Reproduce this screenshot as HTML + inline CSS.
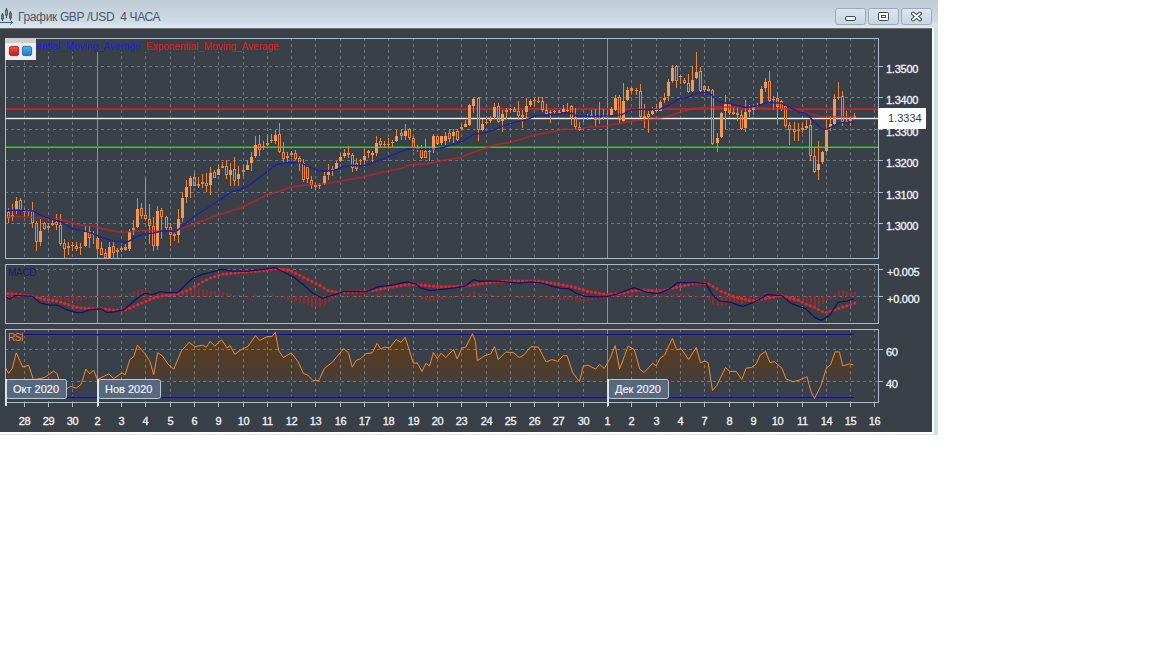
<!DOCTYPE html>
<html><head><meta charset="utf-8"><style>
html,body{margin:0;padding:0;background:#fff;width:1152px;height:648px;overflow:hidden;position:relative;font-family:"Liberation Sans", sans-serif}
</style></head><body>
<svg width="1152" height="648" viewBox="0 0 1152 648" style="position:absolute;left:0;top:0" shape-rendering="crispEdges">
<defs><linearGradient id="tb" x1="0" y1="0" x2="0" y2="1"><stop offset="0" stop-color="#bfcbd7"/><stop offset="0.75" stop-color="#cddae6"/><stop offset="1" stop-color="#dfe8f0"/></linearGradient><linearGradient id="rsif" gradientUnits="userSpaceOnUse" x1="0" y1="333" x2="0" y2="382"><stop offset="0" stop-color="#5e3c1a"/><stop offset="0.75" stop-color="#4e3d2e"/><stop offset="1" stop-color="#443f3c"/></linearGradient><linearGradient id="btn" x1="0" y1="0" x2="0" y2="1"><stop offset="0" stop-color="#dde6ef"/><stop offset="1" stop-color="#c9d4df"/></linearGradient><clipPath id="cmain"><rect x="6" y="39" width="872" height="219"/></clipPath><clipPath id="cmacd"><rect x="6" y="265" width="872" height="58"/></clipPath><clipPath id="crsi"><rect x="6" y="330" width="872" height="72"/></clipPath><clipPath id="crsif"><rect x="6" y="330" width="872" height="51"/></clipPath></defs>
<rect x="0" y="0" width="1152" height="648" fill="#ffffff"/>
<rect x="0" y="0" width="938" height="28" fill="url(#tb)"/>
<rect x="0" y="28" width="932" height="1" fill="#6c6c6e"/>
<rect x="0" y="29" width="932" height="403" fill="#3a4048"/>
<rect x="932" y="28" width="2" height="407" fill="#ffffff"/>
<rect x="934" y="28" width="4" height="407" fill="#d3dfea"/>
<rect x="0" y="434" width="934" height="1" fill="#e2e6ea"/>
<polygon points="5.7,381.0 5.7,368.1 8.6,373.5 12.4,368.1 16.2,352.8 22.9,367.2 28.6,365.2 33.4,379.6 41.1,378.6 45.8,376.7 53.5,371.0 57.3,373.8 59.2,381.5 65.9,389.1 70.7,386.3 76.4,388.2 81.2,384.3 85.9,369.1 89.8,373.8 93.6,370.0 97.4,379.6 108.9,373.8 113.6,378.6 122.2,372.9 125.1,374.8 129.9,359.5 133.7,356.6 137.5,345.2 145.1,353.8 149.9,361.4 153.7,374.8 157.6,352.8 162.3,355.7 168.1,364.3 173.8,369.1 181.4,350.9 189.1,342.3 194.8,346.7 202.4,345.2 206.3,347.1 210.1,341.4 214.8,346.1 221.5,339.8 227.2,348.0 230.1,345.6 234.8,354.4 240.6,350.0 248.2,346.1 255.5,335.6 259.7,340.4 267.3,336.6 272.1,336.6 275.3,332.2 278.8,350.9 283.5,357.6 291.2,352.8 297.9,361.4 303.6,373.8 307.4,374.8 313.1,380.5 318.9,380.5 324.6,368.1 332.2,362.4 343.7,348.6 348.5,352.8 352.3,367.2 356.1,360.5 360.9,358.6 365.7,353.8 372.3,352.8 377.1,343.3 380.9,349.0 384.8,347.1 389.5,348.0 396.2,339.5 401.0,342.3 405.2,337.2 413.4,363.3 417.2,362.8 422.0,371.5 425.8,363.3 429.5,366.2 433.4,352.4 437.2,358.6 441.0,353.2 445.8,357.6 453.4,349.4 457.2,358.9 462.0,348.0 465.8,347.1 472.5,333.7 475.4,341.4 477.3,360.5 484.9,355.7 490.7,353.8 494.5,346.7 498.3,359.5 505.9,351.9 513.6,352.8 519.3,357.6 524.1,354.7 530.8,346.7 538.4,347.1 546.1,362.0 551.8,359.5 557.5,361.4 563.3,355.7 567.1,355.7 572.8,372.9 579.5,381.5 583.3,366.2 588.1,365.2 595.7,369.1 599.5,364.3 604.3,368.5 610.0,358.6 615.2,345.6 619.6,369.1 628.2,346.1 634.3,349.7 639.8,369.2 644.1,372.5 652.8,363.2 656.0,366.0 660.4,358.0 664.7,355.1 672.3,338.4 676.7,349.7 681.0,348.6 688.6,359.5 696.2,347.5 700.5,362.7 704.9,361.0 708.1,362.7 712.5,390.5 716.8,385.5 725.5,367.5 729.8,371.4 736.3,371.4 741.8,379.6 746.1,368.1 751.5,367.5 755.9,364.5 760.2,355.1 765.6,351.4 770.0,362.7 774.3,361.6 781.9,368.1 786.2,379.0 792.8,381.8 799.3,380.1 806.9,376.8 811.2,392.0 814.5,398.5 821.0,385.5 826.4,368.1 830.7,364.5 835.1,351.9 839.4,351.9 842.7,366.0 849.2,363.8 853.5,364.9 853.5,381.0" fill="url(#rsif)" shape-rendering="auto" clip-path="url(#crsif)"/>
<line x1="24.5" y1="38" x2="24.5" y2="258" stroke="#6f7882" stroke-width="1" stroke-dasharray="3 3" opacity="1"/>
<line x1="48.5" y1="38" x2="48.5" y2="258" stroke="#6f7882" stroke-width="1" stroke-dasharray="3 3" opacity="1"/>
<line x1="72.5" y1="38" x2="72.5" y2="258" stroke="#6f7882" stroke-width="1" stroke-dasharray="3 3" opacity="1"/>
<rect x="97" y="39" width="1" height="219" fill="#8893a0"/>
<line x1="121.5" y1="38" x2="121.5" y2="258" stroke="#6f7882" stroke-width="1" stroke-dasharray="3 3" opacity="1"/>
<line x1="145.5" y1="38" x2="145.5" y2="258" stroke="#6f7882" stroke-width="1" stroke-dasharray="3 3" opacity="1"/>
<line x1="170.5" y1="38" x2="170.5" y2="258" stroke="#6f7882" stroke-width="1" stroke-dasharray="3 3" opacity="1"/>
<line x1="194.5" y1="38" x2="194.5" y2="258" stroke="#6f7882" stroke-width="1" stroke-dasharray="3 3" opacity="1"/>
<line x1="218.5" y1="38" x2="218.5" y2="258" stroke="#6f7882" stroke-width="1" stroke-dasharray="3 3" opacity="1"/>
<line x1="243.5" y1="38" x2="243.5" y2="258" stroke="#6f7882" stroke-width="1" stroke-dasharray="3 3" opacity="1"/>
<line x1="267.5" y1="38" x2="267.5" y2="258" stroke="#6f7882" stroke-width="1" stroke-dasharray="3 3" opacity="1"/>
<line x1="291.5" y1="38" x2="291.5" y2="258" stroke="#6f7882" stroke-width="1" stroke-dasharray="3 3" opacity="1"/>
<line x1="315.5" y1="38" x2="315.5" y2="258" stroke="#6f7882" stroke-width="1" stroke-dasharray="3 3" opacity="1"/>
<line x1="340.5" y1="38" x2="340.5" y2="258" stroke="#6f7882" stroke-width="1" stroke-dasharray="3 3" opacity="1"/>
<line x1="364.5" y1="38" x2="364.5" y2="258" stroke="#6f7882" stroke-width="1" stroke-dasharray="3 3" opacity="1"/>
<line x1="388.5" y1="38" x2="388.5" y2="258" stroke="#6f7882" stroke-width="1" stroke-dasharray="3 3" opacity="1"/>
<line x1="413.5" y1="38" x2="413.5" y2="258" stroke="#6f7882" stroke-width="1" stroke-dasharray="3 3" opacity="1"/>
<line x1="437.5" y1="38" x2="437.5" y2="258" stroke="#6f7882" stroke-width="1" stroke-dasharray="3 3" opacity="1"/>
<line x1="461.5" y1="38" x2="461.5" y2="258" stroke="#6f7882" stroke-width="1" stroke-dasharray="3 3" opacity="1"/>
<line x1="486.5" y1="38" x2="486.5" y2="258" stroke="#6f7882" stroke-width="1" stroke-dasharray="3 3" opacity="1"/>
<line x1="510.5" y1="38" x2="510.5" y2="258" stroke="#6f7882" stroke-width="1" stroke-dasharray="3 3" opacity="1"/>
<line x1="534.5" y1="38" x2="534.5" y2="258" stroke="#6f7882" stroke-width="1" stroke-dasharray="3 3" opacity="1"/>
<line x1="558.5" y1="38" x2="558.5" y2="258" stroke="#6f7882" stroke-width="1" stroke-dasharray="3 3" opacity="1"/>
<line x1="583.5" y1="38" x2="583.5" y2="258" stroke="#6f7882" stroke-width="1" stroke-dasharray="3 3" opacity="1"/>
<rect x="607" y="39" width="1" height="219" fill="#8893a0"/>
<line x1="631.5" y1="38" x2="631.5" y2="258" stroke="#6f7882" stroke-width="1" stroke-dasharray="3 3" opacity="1"/>
<line x1="656.5" y1="38" x2="656.5" y2="258" stroke="#6f7882" stroke-width="1" stroke-dasharray="3 3" opacity="1"/>
<line x1="680.5" y1="38" x2="680.5" y2="258" stroke="#6f7882" stroke-width="1" stroke-dasharray="3 3" opacity="1"/>
<line x1="704.5" y1="38" x2="704.5" y2="258" stroke="#6f7882" stroke-width="1" stroke-dasharray="3 3" opacity="1"/>
<line x1="729.5" y1="38" x2="729.5" y2="258" stroke="#6f7882" stroke-width="1" stroke-dasharray="3 3" opacity="1"/>
<line x1="753.5" y1="38" x2="753.5" y2="258" stroke="#6f7882" stroke-width="1" stroke-dasharray="3 3" opacity="1"/>
<line x1="777.5" y1="38" x2="777.5" y2="258" stroke="#6f7882" stroke-width="1" stroke-dasharray="3 3" opacity="1"/>
<line x1="802.5" y1="38" x2="802.5" y2="258" stroke="#6f7882" stroke-width="1" stroke-dasharray="3 3" opacity="1"/>
<line x1="826.5" y1="38" x2="826.5" y2="258" stroke="#6f7882" stroke-width="1" stroke-dasharray="3 3" opacity="1"/>
<line x1="850.5" y1="38" x2="850.5" y2="258" stroke="#6f7882" stroke-width="1" stroke-dasharray="3 3" opacity="1"/>
<line x1="874.5" y1="38" x2="874.5" y2="258" stroke="#6f7882" stroke-width="1" stroke-dasharray="3 3" opacity="1"/>
<line x1="24.5" y1="264" x2="24.5" y2="323" stroke="#6f7882" stroke-width="1" stroke-dasharray="3 3" opacity="1"/>
<line x1="48.5" y1="264" x2="48.5" y2="323" stroke="#6f7882" stroke-width="1" stroke-dasharray="3 3" opacity="1"/>
<line x1="72.5" y1="264" x2="72.5" y2="323" stroke="#6f7882" stroke-width="1" stroke-dasharray="3 3" opacity="1"/>
<rect x="97" y="265" width="1" height="58" fill="#8893a0"/>
<line x1="121.5" y1="264" x2="121.5" y2="323" stroke="#6f7882" stroke-width="1" stroke-dasharray="3 3" opacity="1"/>
<line x1="145.5" y1="264" x2="145.5" y2="323" stroke="#6f7882" stroke-width="1" stroke-dasharray="3 3" opacity="1"/>
<line x1="170.5" y1="264" x2="170.5" y2="323" stroke="#6f7882" stroke-width="1" stroke-dasharray="3 3" opacity="1"/>
<line x1="194.5" y1="264" x2="194.5" y2="323" stroke="#6f7882" stroke-width="1" stroke-dasharray="3 3" opacity="1"/>
<line x1="218.5" y1="264" x2="218.5" y2="323" stroke="#6f7882" stroke-width="1" stroke-dasharray="3 3" opacity="1"/>
<line x1="243.5" y1="264" x2="243.5" y2="323" stroke="#6f7882" stroke-width="1" stroke-dasharray="3 3" opacity="1"/>
<line x1="267.5" y1="264" x2="267.5" y2="323" stroke="#6f7882" stroke-width="1" stroke-dasharray="3 3" opacity="1"/>
<line x1="291.5" y1="264" x2="291.5" y2="323" stroke="#6f7882" stroke-width="1" stroke-dasharray="3 3" opacity="1"/>
<line x1="315.5" y1="264" x2="315.5" y2="323" stroke="#6f7882" stroke-width="1" stroke-dasharray="3 3" opacity="1"/>
<line x1="340.5" y1="264" x2="340.5" y2="323" stroke="#6f7882" stroke-width="1" stroke-dasharray="3 3" opacity="1"/>
<line x1="364.5" y1="264" x2="364.5" y2="323" stroke="#6f7882" stroke-width="1" stroke-dasharray="3 3" opacity="1"/>
<line x1="388.5" y1="264" x2="388.5" y2="323" stroke="#6f7882" stroke-width="1" stroke-dasharray="3 3" opacity="1"/>
<line x1="413.5" y1="264" x2="413.5" y2="323" stroke="#6f7882" stroke-width="1" stroke-dasharray="3 3" opacity="1"/>
<line x1="437.5" y1="264" x2="437.5" y2="323" stroke="#6f7882" stroke-width="1" stroke-dasharray="3 3" opacity="1"/>
<line x1="461.5" y1="264" x2="461.5" y2="323" stroke="#6f7882" stroke-width="1" stroke-dasharray="3 3" opacity="1"/>
<line x1="486.5" y1="264" x2="486.5" y2="323" stroke="#6f7882" stroke-width="1" stroke-dasharray="3 3" opacity="1"/>
<line x1="510.5" y1="264" x2="510.5" y2="323" stroke="#6f7882" stroke-width="1" stroke-dasharray="3 3" opacity="1"/>
<line x1="534.5" y1="264" x2="534.5" y2="323" stroke="#6f7882" stroke-width="1" stroke-dasharray="3 3" opacity="1"/>
<line x1="558.5" y1="264" x2="558.5" y2="323" stroke="#6f7882" stroke-width="1" stroke-dasharray="3 3" opacity="1"/>
<line x1="583.5" y1="264" x2="583.5" y2="323" stroke="#6f7882" stroke-width="1" stroke-dasharray="3 3" opacity="1"/>
<rect x="607" y="265" width="1" height="58" fill="#8893a0"/>
<line x1="631.5" y1="264" x2="631.5" y2="323" stroke="#6f7882" stroke-width="1" stroke-dasharray="3 3" opacity="1"/>
<line x1="656.5" y1="264" x2="656.5" y2="323" stroke="#6f7882" stroke-width="1" stroke-dasharray="3 3" opacity="1"/>
<line x1="680.5" y1="264" x2="680.5" y2="323" stroke="#6f7882" stroke-width="1" stroke-dasharray="3 3" opacity="1"/>
<line x1="704.5" y1="264" x2="704.5" y2="323" stroke="#6f7882" stroke-width="1" stroke-dasharray="3 3" opacity="1"/>
<line x1="729.5" y1="264" x2="729.5" y2="323" stroke="#6f7882" stroke-width="1" stroke-dasharray="3 3" opacity="1"/>
<line x1="753.5" y1="264" x2="753.5" y2="323" stroke="#6f7882" stroke-width="1" stroke-dasharray="3 3" opacity="1"/>
<line x1="777.5" y1="264" x2="777.5" y2="323" stroke="#6f7882" stroke-width="1" stroke-dasharray="3 3" opacity="1"/>
<line x1="802.5" y1="264" x2="802.5" y2="323" stroke="#6f7882" stroke-width="1" stroke-dasharray="3 3" opacity="1"/>
<line x1="826.5" y1="264" x2="826.5" y2="323" stroke="#6f7882" stroke-width="1" stroke-dasharray="3 3" opacity="1"/>
<line x1="850.5" y1="264" x2="850.5" y2="323" stroke="#6f7882" stroke-width="1" stroke-dasharray="3 3" opacity="1"/>
<line x1="874.5" y1="264" x2="874.5" y2="323" stroke="#6f7882" stroke-width="1" stroke-dasharray="3 3" opacity="1"/>
<line x1="24.5" y1="329" x2="24.5" y2="402" stroke="#6f7882" stroke-width="1" stroke-dasharray="3 3" opacity="1"/>
<line x1="48.5" y1="329" x2="48.5" y2="402" stroke="#6f7882" stroke-width="1" stroke-dasharray="3 3" opacity="1"/>
<line x1="72.5" y1="329" x2="72.5" y2="402" stroke="#6f7882" stroke-width="1" stroke-dasharray="3 3" opacity="1"/>
<rect x="97" y="330" width="1" height="72" fill="#8893a0"/>
<line x1="121.5" y1="329" x2="121.5" y2="402" stroke="#6f7882" stroke-width="1" stroke-dasharray="3 3" opacity="1"/>
<line x1="145.5" y1="329" x2="145.5" y2="402" stroke="#6f7882" stroke-width="1" stroke-dasharray="3 3" opacity="1"/>
<line x1="170.5" y1="329" x2="170.5" y2="402" stroke="#6f7882" stroke-width="1" stroke-dasharray="3 3" opacity="1"/>
<line x1="194.5" y1="329" x2="194.5" y2="402" stroke="#6f7882" stroke-width="1" stroke-dasharray="3 3" opacity="1"/>
<line x1="218.5" y1="329" x2="218.5" y2="402" stroke="#6f7882" stroke-width="1" stroke-dasharray="3 3" opacity="1"/>
<line x1="243.5" y1="329" x2="243.5" y2="402" stroke="#6f7882" stroke-width="1" stroke-dasharray="3 3" opacity="1"/>
<line x1="267.5" y1="329" x2="267.5" y2="402" stroke="#6f7882" stroke-width="1" stroke-dasharray="3 3" opacity="1"/>
<line x1="291.5" y1="329" x2="291.5" y2="402" stroke="#6f7882" stroke-width="1" stroke-dasharray="3 3" opacity="1"/>
<line x1="315.5" y1="329" x2="315.5" y2="402" stroke="#6f7882" stroke-width="1" stroke-dasharray="3 3" opacity="1"/>
<line x1="340.5" y1="329" x2="340.5" y2="402" stroke="#6f7882" stroke-width="1" stroke-dasharray="3 3" opacity="1"/>
<line x1="364.5" y1="329" x2="364.5" y2="402" stroke="#6f7882" stroke-width="1" stroke-dasharray="3 3" opacity="1"/>
<line x1="388.5" y1="329" x2="388.5" y2="402" stroke="#6f7882" stroke-width="1" stroke-dasharray="3 3" opacity="1"/>
<line x1="413.5" y1="329" x2="413.5" y2="402" stroke="#6f7882" stroke-width="1" stroke-dasharray="3 3" opacity="1"/>
<line x1="437.5" y1="329" x2="437.5" y2="402" stroke="#6f7882" stroke-width="1" stroke-dasharray="3 3" opacity="1"/>
<line x1="461.5" y1="329" x2="461.5" y2="402" stroke="#6f7882" stroke-width="1" stroke-dasharray="3 3" opacity="1"/>
<line x1="486.5" y1="329" x2="486.5" y2="402" stroke="#6f7882" stroke-width="1" stroke-dasharray="3 3" opacity="1"/>
<line x1="510.5" y1="329" x2="510.5" y2="402" stroke="#6f7882" stroke-width="1" stroke-dasharray="3 3" opacity="1"/>
<line x1="534.5" y1="329" x2="534.5" y2="402" stroke="#6f7882" stroke-width="1" stroke-dasharray="3 3" opacity="1"/>
<line x1="558.5" y1="329" x2="558.5" y2="402" stroke="#6f7882" stroke-width="1" stroke-dasharray="3 3" opacity="1"/>
<line x1="583.5" y1="329" x2="583.5" y2="402" stroke="#6f7882" stroke-width="1" stroke-dasharray="3 3" opacity="1"/>
<rect x="607" y="330" width="1" height="72" fill="#8893a0"/>
<line x1="631.5" y1="329" x2="631.5" y2="402" stroke="#6f7882" stroke-width="1" stroke-dasharray="3 3" opacity="1"/>
<line x1="656.5" y1="329" x2="656.5" y2="402" stroke="#6f7882" stroke-width="1" stroke-dasharray="3 3" opacity="1"/>
<line x1="680.5" y1="329" x2="680.5" y2="402" stroke="#6f7882" stroke-width="1" stroke-dasharray="3 3" opacity="1"/>
<line x1="704.5" y1="329" x2="704.5" y2="402" stroke="#6f7882" stroke-width="1" stroke-dasharray="3 3" opacity="1"/>
<line x1="729.5" y1="329" x2="729.5" y2="402" stroke="#6f7882" stroke-width="1" stroke-dasharray="3 3" opacity="1"/>
<line x1="753.5" y1="329" x2="753.5" y2="402" stroke="#6f7882" stroke-width="1" stroke-dasharray="3 3" opacity="1"/>
<line x1="777.5" y1="329" x2="777.5" y2="402" stroke="#6f7882" stroke-width="1" stroke-dasharray="3 3" opacity="1"/>
<line x1="802.5" y1="329" x2="802.5" y2="402" stroke="#6f7882" stroke-width="1" stroke-dasharray="3 3" opacity="1"/>
<line x1="826.5" y1="329" x2="826.5" y2="402" stroke="#6f7882" stroke-width="1" stroke-dasharray="3 3" opacity="1"/>
<line x1="850.5" y1="329" x2="850.5" y2="402" stroke="#6f7882" stroke-width="1" stroke-dasharray="3 3" opacity="1"/>
<line x1="874.5" y1="329" x2="874.5" y2="402" stroke="#6f7882" stroke-width="1" stroke-dasharray="3 3" opacity="1"/>
<line x1="5" y1="66.5" x2="878" y2="66.5" stroke="#6f7882" stroke-width="1" stroke-dasharray="3 3" opacity="1"/>
<line x1="5" y1="97.5" x2="878" y2="97.5" stroke="#6f7882" stroke-width="1" stroke-dasharray="3 3" opacity="1"/>
<line x1="5" y1="129.5" x2="878" y2="129.5" stroke="#6f7882" stroke-width="1" stroke-dasharray="3 3" opacity="1"/>
<line x1="5" y1="160.5" x2="878" y2="160.5" stroke="#6f7882" stroke-width="1" stroke-dasharray="3 3" opacity="1"/>
<line x1="5" y1="192.5" x2="878" y2="192.5" stroke="#6f7882" stroke-width="1" stroke-dasharray="3 3" opacity="1"/>
<line x1="5" y1="223.5" x2="878" y2="223.5" stroke="#6f7882" stroke-width="1" stroke-dasharray="3 3" opacity="1"/>
<line x1="5" y1="269.5" x2="878" y2="269.5" stroke="#6f7882" stroke-width="1" stroke-dasharray="3 3" opacity="1"/>
<line x1="5" y1="296.5" x2="878" y2="296.5" stroke="#6f7882" stroke-width="1" stroke-dasharray="3 3" opacity="1"/>
<line x1="5" y1="349.5" x2="878" y2="349.5" stroke="#6f7882" stroke-width="1" stroke-dasharray="3 3" opacity="1"/>
<line x1="5" y1="381.5" x2="878" y2="381.5" stroke="#6f7882" stroke-width="1" stroke-dasharray="3 3" opacity="1"/>
<rect x="6" y="108" width="872" height="2" fill="#dc2020" opacity="0.75"/>
<rect x="6" y="118" width="872" height="1" fill="#eef0f2"/>
<rect x="6" y="117" width="872" height="1" fill="#eef0f2" opacity="0.2"/>
<rect x="6" y="119" width="872" height="1" fill="#eef0f2" opacity="0.2"/>
<rect x="6" y="146" width="872" height="1" fill="#2a8a2a"/>
<rect x="6" y="147" width="872" height="1" fill="#44c044"/>
<g clip-path="url(#cmain)">
<rect x="8" y="208" width="1" height="4" fill="#e8863f"/><rect x="8" y="218" width="1" height="5" fill="#e8863f"/><rect x="7" y="212" width="1" height="6" fill="#e8863f"/><rect x="9" y="212" width="1" height="6" fill="#e8863f"/><rect x="8" y="212" width="1" height="1" fill="#e8863f"/><rect x="8" y="217" width="1" height="1" fill="#e8863f"/><rect x="12" y="204" width="1" height="17" fill="#e8863f"/><rect x="11" y="215" width="3" height="2" fill="#e8863f"/><rect x="16" y="197" width="1" height="17" fill="#e8863f"/><rect x="15" y="201" width="3" height="10" fill="#f09a5a"/><rect x="20" y="198" width="1" height="2" fill="#e8863f"/><rect x="20" y="210" width="1" height="0" fill="#e8863f"/><rect x="19" y="200" width="1" height="10" fill="#e8863f"/><rect x="21" y="200" width="1" height="10" fill="#e8863f"/><rect x="20" y="200" width="1" height="1" fill="#e8863f"/><rect x="20" y="209" width="1" height="1" fill="#e8863f"/><rect x="24" y="208" width="1" height="9" fill="#e8863f"/><rect x="23" y="210" width="3" height="2" fill="#e8863f"/><rect x="28" y="209" width="1" height="7" fill="#e8863f"/><rect x="27" y="210" width="3" height="2" fill="#e8863f"/><rect x="32" y="202" width="1" height="9" fill="#e8863f"/><rect x="32" y="223" width="1" height="5" fill="#e8863f"/><rect x="31" y="211" width="1" height="12" fill="#e8863f"/><rect x="33" y="211" width="1" height="12" fill="#e8863f"/><rect x="32" y="211" width="1" height="1" fill="#e8863f"/><rect x="32" y="222" width="1" height="1" fill="#e8863f"/><rect x="36" y="221" width="1" height="2" fill="#e8863f"/><rect x="36" y="242" width="1" height="9" fill="#e8863f"/><rect x="35" y="223" width="1" height="19" fill="#e8863f"/><rect x="37" y="223" width="1" height="19" fill="#e8863f"/><rect x="36" y="223" width="1" height="1" fill="#e8863f"/><rect x="36" y="241" width="1" height="1" fill="#e8863f"/><rect x="40" y="219" width="1" height="27" fill="#e8863f"/><rect x="39" y="231" width="3" height="11" fill="#f09a5a"/><rect x="44" y="222" width="1" height="1" fill="#e8863f"/><rect x="44" y="229" width="1" height="1" fill="#e8863f"/><rect x="43" y="223" width="1" height="6" fill="#e8863f"/><rect x="45" y="223" width="1" height="6" fill="#e8863f"/><rect x="44" y="223" width="1" height="1" fill="#e8863f"/><rect x="44" y="228" width="1" height="1" fill="#e8863f"/><rect x="48" y="223" width="1" height="7" fill="#e8863f"/><rect x="47" y="226" width="3" height="2" fill="#e8863f"/><rect x="52" y="220" width="1" height="6" fill="#e8863f"/><rect x="51" y="223" width="3" height="2" fill="#e8863f"/><rect x="56" y="214" width="1" height="8" fill="#e8863f"/><rect x="56" y="225" width="1" height="5" fill="#e8863f"/><rect x="55" y="222" width="1" height="3" fill="#e8863f"/><rect x="57" y="222" width="1" height="3" fill="#e8863f"/><rect x="56" y="222" width="1" height="1" fill="#e8863f"/><rect x="56" y="224" width="1" height="1" fill="#e8863f"/><rect x="60" y="214" width="1" height="11" fill="#e8863f"/><rect x="60" y="244" width="1" height="2" fill="#e8863f"/><rect x="59" y="225" width="1" height="19" fill="#e8863f"/><rect x="61" y="225" width="1" height="19" fill="#e8863f"/><rect x="60" y="225" width="1" height="1" fill="#e8863f"/><rect x="60" y="243" width="1" height="1" fill="#e8863f"/><rect x="64" y="239" width="1" height="4" fill="#e8863f"/><rect x="64" y="249" width="1" height="9" fill="#e8863f"/><rect x="63" y="243" width="1" height="6" fill="#e8863f"/><rect x="65" y="243" width="1" height="6" fill="#e8863f"/><rect x="64" y="243" width="1" height="1" fill="#e8863f"/><rect x="64" y="248" width="1" height="1" fill="#e8863f"/><rect x="68" y="242" width="1" height="13" fill="#e8863f"/><rect x="67" y="246" width="3" height="2" fill="#e8863f"/><rect x="72" y="242" width="1" height="9" fill="#e8863f"/><rect x="71" y="245" width="3" height="1" fill="#e8863f"/><rect x="76" y="242" width="1" height="4" fill="#e8863f"/><rect x="76" y="249" width="1" height="2" fill="#e8863f"/><rect x="75" y="246" width="1" height="3" fill="#e8863f"/><rect x="77" y="246" width="1" height="3" fill="#e8863f"/><rect x="76" y="246" width="1" height="1" fill="#e8863f"/><rect x="76" y="248" width="1" height="1" fill="#e8863f"/><rect x="80" y="243" width="1" height="12" fill="#e8863f"/><rect x="79" y="247" width="3" height="1" fill="#e8863f"/><rect x="85" y="226" width="1" height="21" fill="#e8863f"/><rect x="84" y="232" width="3" height="14" fill="#f09a5a"/><rect x="89" y="226" width="1" height="5" fill="#e8863f"/><rect x="89" y="238" width="1" height="10" fill="#e8863f"/><rect x="88" y="231" width="1" height="7" fill="#e8863f"/><rect x="90" y="231" width="1" height="7" fill="#e8863f"/><rect x="89" y="231" width="1" height="1" fill="#e8863f"/><rect x="89" y="237" width="1" height="1" fill="#e8863f"/><rect x="93" y="231" width="1" height="13" fill="#e8863f"/><rect x="92" y="234" width="3" height="1" fill="#e8863f"/><rect x="97" y="237" width="1" height="1" fill="#e8863f"/><rect x="97" y="249" width="1" height="1" fill="#e8863f"/><rect x="96" y="238" width="1" height="11" fill="#e8863f"/><rect x="98" y="238" width="1" height="11" fill="#e8863f"/><rect x="97" y="238" width="1" height="1" fill="#e8863f"/><rect x="97" y="248" width="1" height="1" fill="#e8863f"/><rect x="101" y="242" width="1" height="6" fill="#e8863f"/><rect x="101" y="255" width="1" height="0" fill="#e8863f"/><rect x="100" y="248" width="1" height="7" fill="#e8863f"/><rect x="102" y="248" width="1" height="7" fill="#e8863f"/><rect x="101" y="248" width="1" height="1" fill="#e8863f"/><rect x="101" y="254" width="1" height="1" fill="#e8863f"/><rect x="105" y="249" width="1" height="4" fill="#e8863f"/><rect x="105" y="258" width="1" height="0" fill="#e8863f"/><rect x="104" y="253" width="1" height="5" fill="#e8863f"/><rect x="106" y="253" width="1" height="5" fill="#e8863f"/><rect x="105" y="253" width="1" height="1" fill="#e8863f"/><rect x="105" y="257" width="1" height="1" fill="#e8863f"/><rect x="109" y="242" width="1" height="16" fill="#e8863f"/><rect x="108" y="247" width="3" height="11" fill="#f09a5a"/><rect x="113" y="242" width="1" height="4" fill="#e8863f"/><rect x="113" y="253" width="1" height="5" fill="#e8863f"/><rect x="112" y="246" width="1" height="7" fill="#e8863f"/><rect x="114" y="246" width="1" height="7" fill="#e8863f"/><rect x="113" y="246" width="1" height="1" fill="#e8863f"/><rect x="113" y="252" width="1" height="1" fill="#e8863f"/><rect x="117" y="248" width="1" height="10" fill="#e8863f"/><rect x="116" y="250" width="3" height="2" fill="#e8863f"/><rect x="121" y="246" width="1" height="6" fill="#e8863f"/><rect x="120" y="248" width="3" height="2" fill="#e8863f"/><rect x="125" y="244" width="1" height="7" fill="#e8863f"/><rect x="124" y="247" width="3" height="3" fill="#e8863f"/><rect x="129" y="229" width="1" height="22" fill="#e8863f"/><rect x="128" y="232" width="3" height="17" fill="#f09a5a"/><rect x="133" y="220" width="1" height="15" fill="#e8863f"/><rect x="132" y="228" width="3" height="2" fill="#e8863f"/><rect x="137" y="198" width="1" height="30" fill="#e8863f"/><rect x="136" y="209" width="3" height="18" fill="#f09a5a"/><rect x="141" y="203" width="1" height="5" fill="#e8863f"/><rect x="141" y="216" width="1" height="3" fill="#e8863f"/><rect x="140" y="208" width="1" height="8" fill="#e8863f"/><rect x="142" y="208" width="1" height="8" fill="#e8863f"/><rect x="141" y="208" width="1" height="1" fill="#e8863f"/><rect x="141" y="215" width="1" height="1" fill="#e8863f"/><rect x="145" y="178" width="1" height="37" fill="#e8863f"/><rect x="145" y="219" width="1" height="1" fill="#e8863f"/><rect x="144" y="215" width="1" height="4" fill="#e8863f"/><rect x="146" y="215" width="1" height="4" fill="#e8863f"/><rect x="145" y="215" width="1" height="1" fill="#e8863f"/><rect x="145" y="218" width="1" height="1" fill="#e8863f"/><rect x="149" y="204" width="1" height="15" fill="#e8863f"/><rect x="149" y="226" width="1" height="18" fill="#e8863f"/><rect x="148" y="219" width="1" height="7" fill="#e8863f"/><rect x="150" y="219" width="1" height="7" fill="#e8863f"/><rect x="149" y="219" width="1" height="1" fill="#e8863f"/><rect x="149" y="225" width="1" height="1" fill="#e8863f"/><rect x="153" y="217" width="1" height="9" fill="#e8863f"/><rect x="153" y="246" width="1" height="5" fill="#e8863f"/><rect x="152" y="226" width="1" height="20" fill="#e8863f"/><rect x="154" y="226" width="1" height="20" fill="#e8863f"/><rect x="153" y="226" width="1" height="1" fill="#e8863f"/><rect x="153" y="245" width="1" height="1" fill="#e8863f"/><rect x="157" y="206" width="1" height="44" fill="#e8863f"/><rect x="156" y="211" width="3" height="35" fill="#f09a5a"/><rect x="161" y="208" width="1" height="2" fill="#e8863f"/><rect x="161" y="217" width="1" height="22" fill="#e8863f"/><rect x="160" y="210" width="1" height="7" fill="#e8863f"/><rect x="162" y="210" width="1" height="7" fill="#e8863f"/><rect x="161" y="210" width="1" height="1" fill="#e8863f"/><rect x="161" y="216" width="1" height="1" fill="#e8863f"/><rect x="166" y="216" width="1" height="1" fill="#e8863f"/><rect x="166" y="228" width="1" height="2" fill="#e8863f"/><rect x="165" y="217" width="1" height="11" fill="#e8863f"/><rect x="167" y="217" width="1" height="11" fill="#e8863f"/><rect x="166" y="217" width="1" height="1" fill="#e8863f"/><rect x="166" y="227" width="1" height="1" fill="#e8863f"/><rect x="170" y="223" width="1" height="4" fill="#e8863f"/><rect x="170" y="235" width="1" height="11" fill="#e8863f"/><rect x="169" y="227" width="1" height="8" fill="#e8863f"/><rect x="171" y="227" width="1" height="8" fill="#e8863f"/><rect x="170" y="227" width="1" height="1" fill="#e8863f"/><rect x="170" y="234" width="1" height="1" fill="#e8863f"/><rect x="174" y="231" width="1" height="10" fill="#e8863f"/><rect x="173" y="234" width="3" height="2" fill="#e8863f"/><rect x="178" y="209" width="1" height="34" fill="#e8863f"/><rect x="177" y="219" width="3" height="16" fill="#f09a5a"/><rect x="182" y="192" width="1" height="30" fill="#e8863f"/><rect x="181" y="198" width="3" height="20" fill="#f09a5a"/><rect x="186" y="180" width="1" height="23" fill="#e8863f"/><rect x="185" y="187" width="3" height="10" fill="#f09a5a"/><rect x="190" y="176" width="1" height="22" fill="#e8863f"/><rect x="189" y="178" width="3" height="8" fill="#f09a5a"/><rect x="194" y="173" width="1" height="4" fill="#e8863f"/><rect x="194" y="186" width="1" height="0" fill="#e8863f"/><rect x="193" y="177" width="1" height="9" fill="#e8863f"/><rect x="195" y="177" width="1" height="9" fill="#e8863f"/><rect x="194" y="177" width="1" height="1" fill="#e8863f"/><rect x="194" y="185" width="1" height="1" fill="#e8863f"/><rect x="198" y="177" width="1" height="11" fill="#e8863f"/><rect x="197" y="184" width="3" height="2" fill="#e8863f"/><rect x="202" y="174" width="1" height="14" fill="#e8863f"/><rect x="201" y="182" width="3" height="2" fill="#e8863f"/><rect x="206" y="173" width="1" height="10" fill="#e8863f"/><rect x="206" y="186" width="1" height="6" fill="#e8863f"/><rect x="205" y="183" width="1" height="3" fill="#e8863f"/><rect x="207" y="183" width="1" height="3" fill="#e8863f"/><rect x="206" y="183" width="1" height="1" fill="#e8863f"/><rect x="206" y="185" width="1" height="1" fill="#e8863f"/><rect x="210" y="167" width="1" height="28" fill="#e8863f"/><rect x="209" y="173" width="3" height="12" fill="#f09a5a"/><rect x="214" y="170" width="1" height="2" fill="#e8863f"/><rect x="214" y="178" width="1" height="0" fill="#e8863f"/><rect x="213" y="172" width="1" height="6" fill="#e8863f"/><rect x="215" y="172" width="1" height="6" fill="#e8863f"/><rect x="214" y="172" width="1" height="1" fill="#e8863f"/><rect x="214" y="177" width="1" height="1" fill="#e8863f"/><rect x="218" y="165" width="1" height="10" fill="#e8863f"/><rect x="217" y="169" width="3" height="6" fill="#f09a5a"/><rect x="222" y="162" width="1" height="6" fill="#e8863f"/><rect x="221" y="166" width="3" height="2" fill="#e8863f"/><rect x="226" y="160" width="1" height="6" fill="#e8863f"/><rect x="226" y="175" width="1" height="4" fill="#e8863f"/><rect x="225" y="166" width="1" height="9" fill="#e8863f"/><rect x="227" y="166" width="1" height="9" fill="#e8863f"/><rect x="226" y="166" width="1" height="1" fill="#e8863f"/><rect x="226" y="174" width="1" height="1" fill="#e8863f"/><rect x="230" y="163" width="1" height="23" fill="#e8863f"/><rect x="229" y="170" width="3" height="5" fill="#f09a5a"/><rect x="234" y="157" width="1" height="12" fill="#e8863f"/><rect x="234" y="181" width="1" height="5" fill="#e8863f"/><rect x="233" y="169" width="1" height="12" fill="#e8863f"/><rect x="235" y="169" width="1" height="12" fill="#e8863f"/><rect x="234" y="169" width="1" height="1" fill="#e8863f"/><rect x="234" y="180" width="1" height="1" fill="#e8863f"/><rect x="238" y="166" width="1" height="20" fill="#e8863f"/><rect x="237" y="174" width="3" height="5" fill="#f09a5a"/><rect x="243" y="165" width="1" height="11" fill="#e8863f"/><rect x="242" y="170" width="3" height="2" fill="#e8863f"/><rect x="247" y="160" width="1" height="10" fill="#e8863f"/><rect x="246" y="165" width="3" height="5" fill="#f09a5a"/><rect x="251" y="152" width="1" height="19" fill="#e8863f"/><rect x="250" y="157" width="3" height="6" fill="#f09a5a"/><rect x="255" y="136" width="1" height="22" fill="#e8863f"/><rect x="254" y="145" width="3" height="11" fill="#f09a5a"/><rect x="259" y="135" width="1" height="9" fill="#e8863f"/><rect x="259" y="150" width="1" height="6" fill="#e8863f"/><rect x="258" y="144" width="1" height="6" fill="#e8863f"/><rect x="260" y="144" width="1" height="6" fill="#e8863f"/><rect x="259" y="144" width="1" height="1" fill="#e8863f"/><rect x="259" y="149" width="1" height="1" fill="#e8863f"/><rect x="263" y="141" width="1" height="9" fill="#e8863f"/><rect x="262" y="146" width="3" height="2" fill="#e8863f"/><rect x="267" y="134" width="1" height="12" fill="#e8863f"/><rect x="266" y="143" width="3" height="2" fill="#e8863f"/><rect x="271" y="134" width="1" height="9" fill="#e8863f"/><rect x="270" y="140" width="3" height="1" fill="#e8863f"/><rect x="275" y="130" width="1" height="14" fill="#e8863f"/><rect x="274" y="135" width="3" height="6" fill="#f09a5a"/><rect x="279" y="123" width="1" height="11" fill="#e8863f"/><rect x="279" y="152" width="1" height="1" fill="#e8863f"/><rect x="278" y="134" width="1" height="18" fill="#e8863f"/><rect x="280" y="134" width="1" height="18" fill="#e8863f"/><rect x="279" y="134" width="1" height="1" fill="#e8863f"/><rect x="279" y="151" width="1" height="1" fill="#e8863f"/><rect x="283" y="142" width="1" height="10" fill="#e8863f"/><rect x="283" y="159" width="1" height="4" fill="#e8863f"/><rect x="282" y="152" width="1" height="7" fill="#e8863f"/><rect x="284" y="152" width="1" height="7" fill="#e8863f"/><rect x="283" y="152" width="1" height="1" fill="#e8863f"/><rect x="283" y="158" width="1" height="1" fill="#e8863f"/><rect x="287" y="152" width="1" height="10" fill="#e8863f"/><rect x="286" y="156" width="3" height="2" fill="#e8863f"/><rect x="291" y="151" width="1" height="6" fill="#e8863f"/><rect x="290" y="153" width="3" height="2" fill="#e8863f"/><rect x="295" y="150" width="1" height="3" fill="#e8863f"/><rect x="295" y="159" width="1" height="1" fill="#e8863f"/><rect x="294" y="153" width="1" height="6" fill="#e8863f"/><rect x="296" y="153" width="1" height="6" fill="#e8863f"/><rect x="295" y="153" width="1" height="1" fill="#e8863f"/><rect x="295" y="158" width="1" height="1" fill="#e8863f"/><rect x="299" y="156" width="1" height="2" fill="#e8863f"/><rect x="299" y="164" width="1" height="7" fill="#e8863f"/><rect x="298" y="158" width="1" height="6" fill="#e8863f"/><rect x="300" y="158" width="1" height="6" fill="#e8863f"/><rect x="299" y="158" width="1" height="1" fill="#e8863f"/><rect x="299" y="163" width="1" height="1" fill="#e8863f"/><rect x="303" y="159" width="1" height="4" fill="#e8863f"/><rect x="303" y="180" width="1" height="2" fill="#e8863f"/><rect x="302" y="163" width="1" height="17" fill="#e8863f"/><rect x="304" y="163" width="1" height="17" fill="#e8863f"/><rect x="303" y="163" width="1" height="1" fill="#e8863f"/><rect x="303" y="179" width="1" height="1" fill="#e8863f"/><rect x="307" y="165" width="1" height="2" fill="#e8863f"/><rect x="307" y="179" width="1" height="4" fill="#e8863f"/><rect x="306" y="167" width="1" height="12" fill="#e8863f"/><rect x="308" y="167" width="1" height="12" fill="#e8863f"/><rect x="307" y="167" width="1" height="1" fill="#e8863f"/><rect x="307" y="178" width="1" height="1" fill="#e8863f"/><rect x="311" y="176" width="1" height="4" fill="#e8863f"/><rect x="311" y="185" width="1" height="4" fill="#e8863f"/><rect x="310" y="180" width="1" height="5" fill="#e8863f"/><rect x="312" y="180" width="1" height="5" fill="#e8863f"/><rect x="311" y="180" width="1" height="1" fill="#e8863f"/><rect x="311" y="184" width="1" height="1" fill="#e8863f"/><rect x="315" y="183" width="1" height="7" fill="#e8863f"/><rect x="314" y="185" width="3" height="2" fill="#e8863f"/><rect x="319" y="183" width="1" height="6" fill="#e8863f"/><rect x="318" y="185" width="3" height="1" fill="#e8863f"/><rect x="324" y="172" width="1" height="13" fill="#e8863f"/><rect x="323" y="176" width="3" height="8" fill="#f09a5a"/><rect x="328" y="164" width="1" height="16" fill="#e8863f"/><rect x="327" y="172" width="3" height="3" fill="#f09a5a"/><rect x="332" y="166" width="1" height="10" fill="#e8863f"/><rect x="331" y="169" width="3" height="2" fill="#e8863f"/><rect x="336" y="161" width="1" height="8" fill="#e8863f"/><rect x="335" y="163" width="3" height="6" fill="#f09a5a"/><rect x="340" y="153" width="1" height="9" fill="#e8863f"/><rect x="339" y="157" width="3" height="4" fill="#f09a5a"/><rect x="344" y="149" width="1" height="9" fill="#e8863f"/><rect x="343" y="153" width="3" height="3" fill="#f09a5a"/><rect x="348" y="146" width="1" height="12" fill="#e8863f"/><rect x="347" y="153" width="3" height="2" fill="#e8863f"/><rect x="352" y="153" width="1" height="2" fill="#e8863f"/><rect x="352" y="168" width="1" height="4" fill="#e8863f"/><rect x="351" y="155" width="1" height="13" fill="#e8863f"/><rect x="353" y="155" width="1" height="13" fill="#e8863f"/><rect x="352" y="155" width="1" height="1" fill="#e8863f"/><rect x="352" y="167" width="1" height="1" fill="#e8863f"/><rect x="356" y="158" width="1" height="5" fill="#e8863f"/><rect x="356" y="169" width="1" height="2" fill="#e8863f"/><rect x="355" y="163" width="1" height="6" fill="#e8863f"/><rect x="357" y="163" width="1" height="6" fill="#e8863f"/><rect x="356" y="163" width="1" height="1" fill="#e8863f"/><rect x="356" y="168" width="1" height="1" fill="#e8863f"/><rect x="360" y="159" width="1" height="6" fill="#e8863f"/><rect x="359" y="160" width="3" height="1" fill="#e8863f"/><rect x="364" y="149" width="1" height="15" fill="#e8863f"/><rect x="363" y="156" width="3" height="4" fill="#f09a5a"/><rect x="368" y="150" width="1" height="8" fill="#e8863f"/><rect x="367" y="151" width="3" height="2" fill="#e8863f"/><rect x="372" y="151" width="1" height="11" fill="#e8863f"/><rect x="371" y="153" width="3" height="2" fill="#f09a5a"/><rect x="376" y="136" width="1" height="20" fill="#e8863f"/><rect x="375" y="143" width="3" height="10" fill="#f09a5a"/><rect x="380" y="138" width="1" height="3" fill="#e8863f"/><rect x="380" y="145" width="1" height="2" fill="#e8863f"/><rect x="379" y="141" width="1" height="4" fill="#e8863f"/><rect x="381" y="141" width="1" height="4" fill="#e8863f"/><rect x="380" y="141" width="1" height="1" fill="#e8863f"/><rect x="380" y="144" width="1" height="1" fill="#e8863f"/><rect x="384" y="141" width="1" height="7" fill="#e8863f"/><rect x="383" y="144" width="3" height="1" fill="#e8863f"/><rect x="388" y="138" width="1" height="9" fill="#e8863f"/><rect x="387" y="144" width="3" height="1" fill="#e8863f"/><rect x="392" y="140" width="1" height="7" fill="#e8863f"/><rect x="391" y="142" width="3" height="1" fill="#e8863f"/><rect x="396" y="130" width="1" height="12" fill="#e8863f"/><rect x="395" y="136" width="3" height="5" fill="#f09a5a"/><rect x="401" y="129" width="1" height="4" fill="#e8863f"/><rect x="401" y="136" width="1" height="4" fill="#e8863f"/><rect x="400" y="133" width="1" height="3" fill="#e8863f"/><rect x="402" y="133" width="1" height="3" fill="#e8863f"/><rect x="401" y="133" width="1" height="1" fill="#e8863f"/><rect x="401" y="135" width="1" height="1" fill="#e8863f"/><rect x="405" y="124" width="1" height="16" fill="#e8863f"/><rect x="404" y="131" width="3" height="5" fill="#f09a5a"/><rect x="409" y="128" width="1" height="1" fill="#e8863f"/><rect x="409" y="138" width="1" height="2" fill="#e8863f"/><rect x="408" y="129" width="1" height="9" fill="#e8863f"/><rect x="410" y="129" width="1" height="9" fill="#e8863f"/><rect x="409" y="129" width="1" height="1" fill="#e8863f"/><rect x="409" y="137" width="1" height="1" fill="#e8863f"/><rect x="413" y="136" width="1" height="2" fill="#e8863f"/><rect x="413" y="150" width="1" height="1" fill="#e8863f"/><rect x="412" y="138" width="1" height="12" fill="#e8863f"/><rect x="414" y="138" width="1" height="12" fill="#e8863f"/><rect x="413" y="138" width="1" height="1" fill="#e8863f"/><rect x="413" y="149" width="1" height="1" fill="#e8863f"/><rect x="417" y="145" width="1" height="7" fill="#e8863f"/><rect x="416" y="148" width="3" height="1" fill="#e8863f"/><rect x="421" y="145" width="1" height="4" fill="#e8863f"/><rect x="421" y="158" width="1" height="1" fill="#e8863f"/><rect x="420" y="149" width="1" height="9" fill="#e8863f"/><rect x="422" y="149" width="1" height="9" fill="#e8863f"/><rect x="421" y="149" width="1" height="1" fill="#e8863f"/><rect x="421" y="157" width="1" height="1" fill="#e8863f"/><rect x="425" y="139" width="1" height="12" fill="#e8863f"/><rect x="425" y="158" width="1" height="0" fill="#e8863f"/><rect x="424" y="151" width="1" height="7" fill="#e8863f"/><rect x="426" y="151" width="1" height="7" fill="#e8863f"/><rect x="425" y="151" width="1" height="1" fill="#e8863f"/><rect x="425" y="157" width="1" height="1" fill="#e8863f"/><rect x="429" y="148" width="1" height="13" fill="#e8863f"/><rect x="428" y="151" width="3" height="1" fill="#e8863f"/><rect x="433" y="134" width="1" height="19" fill="#e8863f"/><rect x="432" y="136" width="3" height="14" fill="#f09a5a"/><rect x="437" y="136" width="1" height="0" fill="#e8863f"/><rect x="437" y="144" width="1" height="1" fill="#e8863f"/><rect x="436" y="136" width="1" height="8" fill="#e8863f"/><rect x="438" y="136" width="1" height="8" fill="#e8863f"/><rect x="437" y="136" width="1" height="1" fill="#e8863f"/><rect x="437" y="143" width="1" height="1" fill="#e8863f"/><rect x="441" y="136" width="1" height="9" fill="#e8863f"/><rect x="440" y="136" width="3" height="7" fill="#f09a5a"/><rect x="445" y="132" width="1" height="13" fill="#e8863f"/><rect x="444" y="136" width="3" height="5" fill="#f09a5a"/><rect x="449" y="129" width="1" height="4" fill="#e8863f"/><rect x="449" y="139" width="1" height="3" fill="#e8863f"/><rect x="448" y="133" width="1" height="6" fill="#e8863f"/><rect x="450" y="133" width="1" height="6" fill="#e8863f"/><rect x="449" y="133" width="1" height="1" fill="#e8863f"/><rect x="449" y="138" width="1" height="1" fill="#e8863f"/><rect x="453" y="129" width="1" height="14" fill="#e8863f"/><rect x="452" y="132" width="3" height="4" fill="#f09a5a"/><rect x="457" y="129" width="1" height="2" fill="#e8863f"/><rect x="457" y="140" width="1" height="1" fill="#e8863f"/><rect x="456" y="131" width="1" height="9" fill="#e8863f"/><rect x="458" y="131" width="1" height="9" fill="#e8863f"/><rect x="457" y="131" width="1" height="1" fill="#e8863f"/><rect x="457" y="139" width="1" height="1" fill="#e8863f"/><rect x="461" y="124" width="1" height="6" fill="#e8863f"/><rect x="460" y="127" width="3" height="2" fill="#e8863f"/><rect x="465" y="120" width="1" height="7" fill="#e8863f"/><rect x="464" y="124" width="3" height="3" fill="#f09a5a"/><rect x="469" y="104" width="1" height="22" fill="#e8863f"/><rect x="468" y="105" width="3" height="20" fill="#f09a5a"/><rect x="473" y="98" width="1" height="15" fill="#e8863f"/><rect x="472" y="99" width="3" height="7" fill="#f09a5a"/><rect x="478" y="97" width="1" height="1" fill="#e8863f"/><rect x="478" y="130" width="1" height="11" fill="#e8863f"/><rect x="477" y="98" width="1" height="32" fill="#e8863f"/><rect x="479" y="98" width="1" height="32" fill="#e8863f"/><rect x="478" y="98" width="1" height="1" fill="#e8863f"/><rect x="478" y="129" width="1" height="1" fill="#e8863f"/><rect x="482" y="119" width="1" height="12" fill="#e8863f"/><rect x="481" y="124" width="3" height="6" fill="#f09a5a"/><rect x="486" y="117" width="1" height="7" fill="#e8863f"/><rect x="485" y="122" width="3" height="1" fill="#e8863f"/><rect x="490" y="116" width="1" height="7" fill="#e8863f"/><rect x="489" y="119" width="3" height="2" fill="#e8863f"/><rect x="494" y="103" width="1" height="16" fill="#e8863f"/><rect x="493" y="107" width="3" height="10" fill="#f09a5a"/><rect x="498" y="103" width="1" height="3" fill="#e8863f"/><rect x="498" y="122" width="1" height="1" fill="#e8863f"/><rect x="497" y="106" width="1" height="16" fill="#e8863f"/><rect x="499" y="106" width="1" height="16" fill="#e8863f"/><rect x="498" y="106" width="1" height="1" fill="#e8863f"/><rect x="498" y="121" width="1" height="1" fill="#e8863f"/><rect x="502" y="110" width="1" height="22" fill="#e8863f"/><rect x="501" y="114" width="3" height="7" fill="#f09a5a"/><rect x="506" y="108" width="1" height="11" fill="#e8863f"/><rect x="505" y="110" width="3" height="2" fill="#e8863f"/><rect x="510" y="108" width="1" height="4" fill="#e8863f"/><rect x="509" y="109" width="3" height="1" fill="#e8863f"/><rect x="514" y="107" width="1" height="2" fill="#e8863f"/><rect x="514" y="112" width="1" height="0" fill="#e8863f"/><rect x="513" y="109" width="1" height="3" fill="#e8863f"/><rect x="515" y="109" width="1" height="3" fill="#e8863f"/><rect x="514" y="109" width="1" height="1" fill="#e8863f"/><rect x="514" y="111" width="1" height="1" fill="#e8863f"/><rect x="518" y="101" width="1" height="10" fill="#e8863f"/><rect x="518" y="116" width="1" height="4" fill="#e8863f"/><rect x="517" y="111" width="1" height="5" fill="#e8863f"/><rect x="519" y="111" width="1" height="5" fill="#e8863f"/><rect x="518" y="111" width="1" height="1" fill="#e8863f"/><rect x="518" y="115" width="1" height="1" fill="#e8863f"/><rect x="522" y="110" width="1" height="18" fill="#e8863f"/><rect x="521" y="115" width="3" height="2" fill="#e8863f"/><rect x="526" y="98" width="1" height="21" fill="#e8863f"/><rect x="525" y="106" width="3" height="6" fill="#f09a5a"/><rect x="530" y="99" width="1" height="8" fill="#e8863f"/><rect x="529" y="101" width="3" height="4" fill="#f09a5a"/><rect x="534" y="98" width="1" height="9" fill="#e8863f"/><rect x="533" y="100" width="3" height="1" fill="#e8863f"/><rect x="538" y="97" width="1" height="6" fill="#e8863f"/><rect x="537" y="101" width="3" height="1" fill="#e8863f"/><rect x="542" y="97" width="1" height="4" fill="#e8863f"/><rect x="542" y="110" width="1" height="2" fill="#e8863f"/><rect x="541" y="101" width="1" height="9" fill="#e8863f"/><rect x="543" y="101" width="1" height="9" fill="#e8863f"/><rect x="542" y="101" width="1" height="1" fill="#e8863f"/><rect x="542" y="109" width="1" height="1" fill="#e8863f"/><rect x="546" y="104" width="1" height="6" fill="#e8863f"/><rect x="546" y="114" width="1" height="1" fill="#e8863f"/><rect x="545" y="110" width="1" height="4" fill="#e8863f"/><rect x="547" y="110" width="1" height="4" fill="#e8863f"/><rect x="546" y="110" width="1" height="1" fill="#e8863f"/><rect x="546" y="113" width="1" height="1" fill="#e8863f"/><rect x="550" y="110" width="1" height="13" fill="#e8863f"/><rect x="549" y="112" width="3" height="1" fill="#e8863f"/><rect x="554" y="110" width="1" height="4" fill="#e8863f"/><rect x="553" y="111" width="3" height="1" fill="#e8863f"/><rect x="559" y="110" width="1" height="4" fill="#e8863f"/><rect x="558" y="112" width="3" height="1" fill="#e8863f"/><rect x="563" y="105" width="1" height="7" fill="#e8863f"/><rect x="562" y="109" width="3" height="3" fill="#f09a5a"/><rect x="567" y="103" width="1" height="9" fill="#e8863f"/><rect x="566" y="110" width="3" height="1" fill="#e8863f"/><rect x="571" y="105" width="1" height="1" fill="#e8863f"/><rect x="571" y="118" width="1" height="7" fill="#e8863f"/><rect x="570" y="106" width="1" height="12" fill="#e8863f"/><rect x="572" y="106" width="1" height="12" fill="#e8863f"/><rect x="571" y="106" width="1" height="1" fill="#e8863f"/><rect x="571" y="117" width="1" height="1" fill="#e8863f"/><rect x="575" y="108" width="1" height="9" fill="#e8863f"/><rect x="575" y="127" width="1" height="3" fill="#e8863f"/><rect x="574" y="117" width="1" height="10" fill="#e8863f"/><rect x="576" y="117" width="1" height="10" fill="#e8863f"/><rect x="575" y="117" width="1" height="1" fill="#e8863f"/><rect x="575" y="126" width="1" height="1" fill="#e8863f"/><rect x="579" y="122" width="1" height="5" fill="#e8863f"/><rect x="579" y="130" width="1" height="1" fill="#e8863f"/><rect x="578" y="127" width="1" height="3" fill="#e8863f"/><rect x="580" y="127" width="1" height="3" fill="#e8863f"/><rect x="579" y="127" width="1" height="1" fill="#e8863f"/><rect x="579" y="129" width="1" height="1" fill="#e8863f"/><rect x="583" y="116" width="1" height="6" fill="#e8863f"/><rect x="582" y="117" width="3" height="1" fill="#e8863f"/><rect x="587" y="114" width="1" height="6" fill="#e8863f"/><rect x="586" y="116" width="3" height="1" fill="#e8863f"/><rect x="591" y="110" width="1" height="8" fill="#e8863f"/><rect x="590" y="115" width="3" height="2" fill="#e8863f"/><rect x="595" y="109" width="1" height="17" fill="#e8863f"/><rect x="594" y="118" width="3" height="2" fill="#e8863f"/><rect x="599" y="102" width="1" height="22" fill="#e8863f"/><rect x="598" y="118" width="3" height="2" fill="#e8863f"/><rect x="603" y="109" width="1" height="11" fill="#e8863f"/><rect x="602" y="117" width="3" height="1" fill="#e8863f"/><rect x="607" y="113" width="1" height="11" fill="#e8863f"/><rect x="606" y="116" width="3" height="1" fill="#e8863f"/><rect x="611" y="107" width="1" height="9" fill="#e8863f"/><rect x="610" y="109" width="3" height="6" fill="#f09a5a"/><rect x="615" y="95" width="1" height="16" fill="#e8863f"/><rect x="614" y="98" width="3" height="12" fill="#f09a5a"/><rect x="619" y="95" width="1" height="2" fill="#e8863f"/><rect x="619" y="120" width="1" height="4" fill="#e8863f"/><rect x="618" y="97" width="1" height="23" fill="#e8863f"/><rect x="620" y="97" width="1" height="23" fill="#e8863f"/><rect x="619" y="97" width="1" height="1" fill="#e8863f"/><rect x="619" y="119" width="1" height="1" fill="#e8863f"/><rect x="623" y="83" width="1" height="39" fill="#e8863f"/><rect x="622" y="101" width="3" height="20" fill="#f09a5a"/><rect x="627" y="87" width="1" height="14" fill="#e8863f"/><rect x="626" y="90" width="3" height="10" fill="#f09a5a"/><rect x="631" y="87" width="1" height="6" fill="#e8863f"/><rect x="630" y="88" width="3" height="3" fill="#e8863f"/><rect x="636" y="88" width="1" height="7" fill="#e8863f"/><rect x="635" y="90" width="3" height="1" fill="#e8863f"/><rect x="640" y="84" width="1" height="7" fill="#e8863f"/><rect x="640" y="117" width="1" height="1" fill="#e8863f"/><rect x="639" y="91" width="1" height="26" fill="#e8863f"/><rect x="641" y="91" width="1" height="26" fill="#e8863f"/><rect x="640" y="91" width="1" height="1" fill="#e8863f"/><rect x="640" y="116" width="1" height="1" fill="#e8863f"/><rect x="644" y="104" width="1" height="24" fill="#e8863f"/><rect x="643" y="116" width="3" height="2" fill="#e8863f"/><rect x="648" y="111" width="1" height="3" fill="#e8863f"/><rect x="648" y="117" width="1" height="16" fill="#e8863f"/><rect x="647" y="114" width="1" height="3" fill="#e8863f"/><rect x="649" y="114" width="1" height="3" fill="#e8863f"/><rect x="648" y="114" width="1" height="1" fill="#e8863f"/><rect x="648" y="116" width="1" height="1" fill="#e8863f"/><rect x="652" y="107" width="1" height="8" fill="#e8863f"/><rect x="651" y="111" width="3" height="3" fill="#f09a5a"/><rect x="656" y="104" width="1" height="8" fill="#e8863f"/><rect x="655" y="108" width="3" height="3" fill="#f09a5a"/><rect x="660" y="100" width="1" height="11" fill="#e8863f"/><rect x="659" y="102" width="3" height="9" fill="#f09a5a"/><rect x="664" y="93" width="1" height="10" fill="#e8863f"/><rect x="663" y="98" width="3" height="2" fill="#f09a5a"/><rect x="668" y="79" width="1" height="22" fill="#e8863f"/><rect x="667" y="82" width="3" height="14" fill="#f09a5a"/><rect x="672" y="65" width="1" height="18" fill="#e8863f"/><rect x="671" y="68" width="3" height="13" fill="#f09a5a"/><rect x="676" y="65" width="1" height="1" fill="#e8863f"/><rect x="676" y="81" width="1" height="7" fill="#e8863f"/><rect x="675" y="66" width="1" height="15" fill="#e8863f"/><rect x="677" y="66" width="1" height="15" fill="#e8863f"/><rect x="676" y="66" width="1" height="1" fill="#e8863f"/><rect x="676" y="80" width="1" height="1" fill="#e8863f"/><rect x="680" y="75" width="1" height="9" fill="#e8863f"/><rect x="679" y="76" width="3" height="1" fill="#e8863f"/><rect x="684" y="78" width="1" height="2" fill="#e8863f"/><rect x="684" y="83" width="1" height="1" fill="#e8863f"/><rect x="683" y="80" width="1" height="3" fill="#e8863f"/><rect x="685" y="80" width="1" height="3" fill="#e8863f"/><rect x="684" y="80" width="1" height="1" fill="#e8863f"/><rect x="684" y="82" width="1" height="1" fill="#e8863f"/><rect x="688" y="74" width="1" height="9" fill="#e8863f"/><rect x="688" y="92" width="1" height="1" fill="#e8863f"/><rect x="687" y="83" width="1" height="9" fill="#e8863f"/><rect x="689" y="83" width="1" height="9" fill="#e8863f"/><rect x="688" y="83" width="1" height="1" fill="#e8863f"/><rect x="688" y="91" width="1" height="1" fill="#e8863f"/><rect x="692" y="66" width="1" height="26" fill="#e8863f"/><rect x="691" y="80" width="3" height="11" fill="#f09a5a"/><rect x="696" y="52" width="1" height="27" fill="#e8863f"/><rect x="695" y="72" width="3" height="6" fill="#f09a5a"/><rect x="700" y="67" width="1" height="4" fill="#e8863f"/><rect x="700" y="91" width="1" height="1" fill="#e8863f"/><rect x="699" y="71" width="1" height="20" fill="#e8863f"/><rect x="701" y="71" width="1" height="20" fill="#e8863f"/><rect x="700" y="71" width="1" height="1" fill="#e8863f"/><rect x="700" y="90" width="1" height="1" fill="#e8863f"/><rect x="704" y="85" width="1" height="1" fill="#e8863f"/><rect x="704" y="90" width="1" height="4" fill="#e8863f"/><rect x="703" y="86" width="1" height="4" fill="#e8863f"/><rect x="705" y="86" width="1" height="4" fill="#e8863f"/><rect x="704" y="86" width="1" height="1" fill="#e8863f"/><rect x="704" y="89" width="1" height="1" fill="#e8863f"/><rect x="708" y="86" width="1" height="6" fill="#e8863f"/><rect x="707" y="89" width="3" height="2" fill="#e8863f"/><rect x="712" y="89" width="1" height="1" fill="#e8863f"/><rect x="712" y="144" width="1" height="1" fill="#e8863f"/><rect x="711" y="90" width="1" height="54" fill="#e8863f"/><rect x="713" y="90" width="1" height="54" fill="#e8863f"/><rect x="712" y="90" width="1" height="1" fill="#e8863f"/><rect x="712" y="143" width="1" height="1" fill="#e8863f"/><rect x="717" y="133" width="1" height="19" fill="#e8863f"/><rect x="716" y="138" width="3" height="5" fill="#f09a5a"/><rect x="721" y="112" width="1" height="26" fill="#e8863f"/><rect x="720" y="113" width="3" height="24" fill="#f09a5a"/><rect x="725" y="95" width="1" height="34" fill="#e8863f"/><rect x="724" y="104" width="3" height="7" fill="#f09a5a"/><rect x="729" y="103" width="1" height="1" fill="#e8863f"/><rect x="729" y="113" width="1" height="2" fill="#e8863f"/><rect x="728" y="104" width="1" height="9" fill="#e8863f"/><rect x="730" y="104" width="1" height="9" fill="#e8863f"/><rect x="729" y="104" width="1" height="1" fill="#e8863f"/><rect x="729" y="112" width="1" height="1" fill="#e8863f"/><rect x="733" y="107" width="1" height="8" fill="#e8863f"/><rect x="732" y="112" width="3" height="2" fill="#e8863f"/><rect x="737" y="107" width="1" height="14" fill="#e8863f"/><rect x="736" y="113" width="3" height="2" fill="#e8863f"/><rect x="741" y="110" width="1" height="5" fill="#e8863f"/><rect x="741" y="129" width="1" height="1" fill="#e8863f"/><rect x="740" y="115" width="1" height="14" fill="#e8863f"/><rect x="742" y="115" width="1" height="14" fill="#e8863f"/><rect x="741" y="115" width="1" height="1" fill="#e8863f"/><rect x="741" y="128" width="1" height="1" fill="#e8863f"/><rect x="745" y="100" width="1" height="32" fill="#e8863f"/><rect x="744" y="112" width="3" height="16" fill="#f09a5a"/><rect x="749" y="105" width="1" height="12" fill="#e8863f"/><rect x="748" y="110" width="3" height="2" fill="#e8863f"/><rect x="753" y="104" width="1" height="11" fill="#e8863f"/><rect x="752" y="107" width="3" height="3" fill="#f09a5a"/><rect x="757" y="103" width="1" height="4" fill="#e8863f"/><rect x="756" y="105" width="3" height="1" fill="#e8863f"/><rect x="761" y="86" width="1" height="19" fill="#e8863f"/><rect x="760" y="89" width="3" height="15" fill="#f09a5a"/><rect x="765" y="78" width="1" height="14" fill="#e8863f"/><rect x="764" y="82" width="3" height="6" fill="#f09a5a"/><rect x="769" y="71" width="1" height="10" fill="#e8863f"/><rect x="769" y="101" width="1" height="3" fill="#e8863f"/><rect x="768" y="81" width="1" height="20" fill="#e8863f"/><rect x="770" y="81" width="1" height="20" fill="#e8863f"/><rect x="769" y="81" width="1" height="1" fill="#e8863f"/><rect x="769" y="100" width="1" height="1" fill="#e8863f"/><rect x="773" y="96" width="1" height="14" fill="#e8863f"/><rect x="772" y="99" width="3" height="1" fill="#e8863f"/><rect x="777" y="92" width="1" height="6" fill="#e8863f"/><rect x="777" y="107" width="1" height="17" fill="#e8863f"/><rect x="776" y="98" width="1" height="9" fill="#e8863f"/><rect x="778" y="98" width="1" height="9" fill="#e8863f"/><rect x="777" y="98" width="1" height="1" fill="#e8863f"/><rect x="777" y="106" width="1" height="1" fill="#e8863f"/><rect x="781" y="100" width="1" height="1" fill="#e8863f"/><rect x="781" y="109" width="1" height="2" fill="#e8863f"/><rect x="780" y="101" width="1" height="8" fill="#e8863f"/><rect x="782" y="101" width="1" height="8" fill="#e8863f"/><rect x="781" y="101" width="1" height="1" fill="#e8863f"/><rect x="781" y="108" width="1" height="1" fill="#e8863f"/><rect x="785" y="105" width="1" height="1" fill="#e8863f"/><rect x="785" y="126" width="1" height="2" fill="#e8863f"/><rect x="784" y="106" width="1" height="20" fill="#e8863f"/><rect x="786" y="106" width="1" height="20" fill="#e8863f"/><rect x="785" y="106" width="1" height="1" fill="#e8863f"/><rect x="785" y="125" width="1" height="1" fill="#e8863f"/><rect x="789" y="122" width="1" height="3" fill="#e8863f"/><rect x="789" y="130" width="1" height="15" fill="#e8863f"/><rect x="788" y="125" width="1" height="5" fill="#e8863f"/><rect x="790" y="125" width="1" height="5" fill="#e8863f"/><rect x="789" y="125" width="1" height="1" fill="#e8863f"/><rect x="789" y="129" width="1" height="1" fill="#e8863f"/><rect x="794" y="122" width="1" height="7" fill="#e8863f"/><rect x="794" y="132" width="1" height="9" fill="#e8863f"/><rect x="793" y="129" width="1" height="3" fill="#e8863f"/><rect x="795" y="129" width="1" height="3" fill="#e8863f"/><rect x="794" y="129" width="1" height="1" fill="#e8863f"/><rect x="794" y="131" width="1" height="1" fill="#e8863f"/><rect x="798" y="123" width="1" height="18" fill="#e8863f"/><rect x="797" y="130" width="3" height="1" fill="#e8863f"/><rect x="802" y="123" width="1" height="10" fill="#e8863f"/><rect x="801" y="128" width="3" height="2" fill="#e8863f"/><rect x="806" y="120" width="1" height="10" fill="#e8863f"/><rect x="805" y="126" width="3" height="2" fill="#f09a5a"/><rect x="810" y="120" width="1" height="5" fill="#e8863f"/><rect x="810" y="156" width="1" height="5" fill="#e8863f"/><rect x="809" y="125" width="1" height="31" fill="#e8863f"/><rect x="811" y="125" width="1" height="31" fill="#e8863f"/><rect x="810" y="125" width="1" height="1" fill="#e8863f"/><rect x="810" y="155" width="1" height="1" fill="#e8863f"/><rect x="814" y="147" width="1" height="9" fill="#e8863f"/><rect x="814" y="172" width="1" height="1" fill="#e8863f"/><rect x="813" y="156" width="1" height="16" fill="#e8863f"/><rect x="815" y="156" width="1" height="16" fill="#e8863f"/><rect x="814" y="156" width="1" height="1" fill="#e8863f"/><rect x="814" y="171" width="1" height="1" fill="#e8863f"/><rect x="818" y="141" width="1" height="39" fill="#e8863f"/><rect x="817" y="164" width="3" height="6" fill="#f09a5a"/><rect x="822" y="151" width="1" height="13" fill="#e8863f"/><rect x="821" y="152" width="3" height="10" fill="#f09a5a"/><rect x="826" y="120" width="1" height="32" fill="#e8863f"/><rect x="825" y="130" width="3" height="21" fill="#f09a5a"/><rect x="830" y="116" width="1" height="15" fill="#e8863f"/><rect x="829" y="124" width="3" height="3" fill="#f09a5a"/><rect x="834" y="94" width="1" height="31" fill="#e8863f"/><rect x="833" y="99" width="3" height="25" fill="#f09a5a"/><rect x="838" y="82" width="1" height="18" fill="#e8863f"/><rect x="837" y="97" width="3" height="1" fill="#e8863f"/><rect x="842" y="91" width="1" height="5" fill="#e8863f"/><rect x="842" y="122" width="1" height="4" fill="#e8863f"/><rect x="841" y="96" width="1" height="26" fill="#e8863f"/><rect x="843" y="96" width="1" height="26" fill="#e8863f"/><rect x="842" y="96" width="1" height="1" fill="#e8863f"/><rect x="842" y="121" width="1" height="1" fill="#e8863f"/><rect x="846" y="111" width="1" height="12" fill="#e8863f"/><rect x="845" y="121" width="3" height="1" fill="#e8863f"/><rect x="850" y="116" width="1" height="10" fill="#e8863f"/><rect x="849" y="119" width="3" height="2" fill="#e8863f"/><rect x="854" y="113" width="1" height="5" fill="#e8863f"/><rect x="853" y="116" width="3" height="2" fill="#e8863f"/>
<polyline points="5.0,217.2 16.0,216.5 33.0,217.2 40.0,218.0 56.0,218.6 72.0,222.8 80.0,224.9 97.0,227.0 108.9,230.4 122.8,232.5 129.7,231.8 143.6,230.4 157.5,231.0 175.5,231.0 180.0,229.1 194.8,223.6 217.0,215.6 241.7,207.5 266.4,195.2 290.4,187.3 300.8,185.6 314.7,184.7 330.3,183.0 349.4,179.5 363.3,176.9 384.2,171.7 401.5,168.2 410.2,164.8 425.8,163.9 443.2,160.4 460.6,157.8 470.0,153.6 494.7,144.9 510.7,142.5 534.2,135.1 556.4,130.7 562.6,129.3 575.0,129.3 589.8,127.0 604.7,126.3 629.4,121.4 654.0,118.9 666.4,117.0 678.8,112.7 691.1,109.0 699.8,107.8 720.0,106.9 750.0,107.5 770.0,108.3 780.0,108.8 789.7,108.9 801.6,111.6 810.2,113.8 821.0,116.5 854.4,116.5" fill="none" stroke="#e01c1c" stroke-width="1.6" stroke-opacity="0.68" shape-rendering="auto"/>
<polyline points="0.0,211.0 16.0,210.0 33.0,211.0 40.0,215.0 50.0,218.6 60.0,221.4 72.0,228.3 80.0,230.4 88.0,231.8 97.0,235.3 103.3,238.0 113.0,240.8 122.8,242.2 128.3,241.5 136.7,236.7 143.6,234.2 153.3,233.2 161.7,231.0 170.0,231.0 175.5,231.8 180.0,227.9 194.8,216.2 217.0,202.0 231.9,191.5 239.3,190.2 249.1,185.3 276.3,164.7 286.2,162.5 301.7,163.2 308.6,166.7 318.3,170.8 326.7,170.8 335.0,170.1 343.3,166.7 351.7,165.3 360.0,166.0 368.3,164.6 376.7,161.1 385.0,158.3 393.9,154.3 407.8,148.8 421.7,149.4 435.6,148.8 446.7,146.7 460.6,141.8 470.0,136.9 473.7,134.4 486.0,132.6 502.1,126.4 513.2,122.7 526.8,119.6 536.7,115.3 558.9,114.1 563.8,112.8 572.5,113.5 577.4,116.5 592.3,116.4 610.9,115.8 622.0,114.6 631.9,109.6 641.7,109.4 660.2,109.0 666.4,106.5 678.8,99.1 690.0,96.4 696.2,93.3 708.5,92.3 712.2,95.8 718.4,101.4 730.7,103.8 745.6,107.5 757.9,105.7 766.5,102.6 781.4,103.2 790.8,107.8 799.4,112.1 805.9,113.2 812.4,119.7 822.1,129.4 827.5,128.9 836.2,124.6 842.6,122.4 853.4,122.2" fill="none" stroke="#1c20a8" stroke-width="1.35" shape-rendering="auto"/>
</g>
<g clip-path="url(#cmacd)">
<rect x="8" y="296" width="2" height="5" fill="#a02a2e" opacity="0.8"/><rect x="12" y="296" width="2" height="4" fill="#a02a2e" opacity="0.8"/><rect x="16" y="296" width="2" height="1" fill="#a02a2e" opacity="0.8"/><rect x="20" y="296" width="2" height="1" fill="#a02a2e" opacity="0.8"/><rect x="24" y="296" width="2" height="1" fill="#a02a2e" opacity="0.8"/><rect x="28" y="296" width="2" height="1" fill="#a02a2e" opacity="0.8"/><rect x="32" y="296" width="2" height="1" fill="#a02a2e" opacity="0.8"/><rect x="36" y="296" width="2" height="3" fill="#a02a2e" opacity="0.8"/><rect x="40" y="296" width="2" height="5" fill="#a02a2e" opacity="0.8"/><rect x="44" y="296" width="2" height="5" fill="#a02a2e" opacity="0.8"/><rect x="48" y="296" width="2" height="5" fill="#a02a2e" opacity="0.8"/><rect x="52" y="296" width="2" height="5" fill="#a02a2e" opacity="0.8"/><rect x="56" y="296" width="2" height="4" fill="#a02a2e" opacity="0.8"/><rect x="60" y="296" width="2" height="4" fill="#a02a2e" opacity="0.8"/><rect x="64" y="296" width="2" height="5" fill="#a02a2e" opacity="0.8"/><rect x="68" y="296" width="2" height="6" fill="#a02a2e" opacity="0.8"/><rect x="72" y="296" width="2" height="5" fill="#a02a2e" opacity="0.8"/><rect x="76" y="296" width="2" height="5" fill="#a02a2e" opacity="0.8"/><rect x="80" y="296" width="2" height="5" fill="#a02a2e" opacity="0.8"/><rect x="85" y="296" width="2" height="3" fill="#a02a2e" opacity="0.8"/><rect x="89" y="296" width="2" height="2" fill="#a02a2e" opacity="0.8"/><rect x="93" y="296" width="2" height="1" fill="#a02a2e" opacity="0.8"/><rect x="97" y="296" width="2" height="1" fill="#a02a2e" opacity="0.8"/><rect x="101" y="296" width="2" height="1" fill="#a02a2e" opacity="0.8"/><rect x="105" y="296" width="2" height="2" fill="#a02a2e" opacity="0.8"/><rect x="109" y="296" width="2" height="3" fill="#a02a2e" opacity="0.8"/><rect x="113" y="296" width="2" height="2" fill="#a02a2e" opacity="0.8"/><rect x="117" y="296" width="2" height="1" fill="#a02a2e" opacity="0.8"/><rect x="121" y="296" width="2" height="1" fill="#a02a2e" opacity="0.8"/><rect x="125" y="295" width="2" height="1" fill="#a02a2e" opacity="0.8"/><rect x="129" y="293" width="2" height="3" fill="#a02a2e" opacity="0.8"/><rect x="133" y="291" width="2" height="5" fill="#a02a2e" opacity="0.8"/><rect x="137" y="290" width="2" height="7" fill="#a02a2e" opacity="0.8"/><rect x="141" y="289" width="2" height="8" fill="#a02a2e" opacity="0.8"/><rect x="145" y="289" width="2" height="8" fill="#a02a2e" opacity="0.8"/><rect x="149" y="291" width="2" height="5" fill="#a02a2e" opacity="0.8"/><rect x="153" y="293" width="2" height="4" fill="#a02a2e" opacity="0.8"/><rect x="157" y="292" width="2" height="4" fill="#a02a2e" opacity="0.8"/><rect x="161" y="292" width="2" height="4" fill="#a02a2e" opacity="0.8"/><rect x="166" y="294" width="2" height="3" fill="#a02a2e" opacity="0.8"/><rect x="170" y="294" width="2" height="2" fill="#a02a2e" opacity="0.8"/><rect x="174" y="294" width="2" height="2" fill="#a02a2e" opacity="0.8"/><rect x="178" y="295" width="2" height="2" fill="#a02a2e" opacity="0.8"/><rect x="182" y="292" width="2" height="4" fill="#a02a2e" opacity="0.8"/><rect x="186" y="289" width="2" height="7" fill="#a02a2e" opacity="0.8"/><rect x="190" y="288" width="2" height="8" fill="#a02a2e" opacity="0.8"/><rect x="194" y="288" width="2" height="9" fill="#a02a2e" opacity="0.8"/><rect x="198" y="288" width="2" height="8" fill="#a02a2e" opacity="0.8"/><rect x="202" y="289" width="2" height="8" fill="#a02a2e" opacity="0.8"/><rect x="206" y="290" width="2" height="7" fill="#a02a2e" opacity="0.8"/><rect x="210" y="291" width="2" height="6" fill="#a02a2e" opacity="0.8"/><rect x="214" y="291" width="2" height="5" fill="#a02a2e" opacity="0.8"/><rect x="218" y="291" width="2" height="5" fill="#a02a2e" opacity="0.8"/><rect x="222" y="292" width="2" height="5" fill="#a02a2e" opacity="0.8"/><rect x="226" y="293" width="2" height="4" fill="#a02a2e" opacity="0.8"/><rect x="230" y="294" width="2" height="2" fill="#a02a2e" opacity="0.8"/><rect x="234" y="295" width="2" height="2" fill="#a02a2e" opacity="0.8"/><rect x="238" y="295" width="2" height="1" fill="#a02a2e" opacity="0.8"/><rect x="243" y="296" width="2" height="1" fill="#a02a2e" opacity="0.8"/><rect x="247" y="296" width="2" height="1" fill="#a02a2e" opacity="0.8"/><rect x="251" y="296" width="2" height="1" fill="#a02a2e" opacity="0.8"/><rect x="255" y="295" width="2" height="1" fill="#a02a2e" opacity="0.8"/><rect x="259" y="295" width="2" height="1" fill="#a02a2e" opacity="0.8"/><rect x="263" y="295" width="2" height="1" fill="#a02a2e" opacity="0.8"/><rect x="267" y="295" width="2" height="1" fill="#a02a2e" opacity="0.8"/><rect x="271" y="295" width="2" height="1" fill="#a02a2e" opacity="0.8"/><rect x="275" y="296" width="2" height="1" fill="#a02a2e" opacity="0.8"/><rect x="279" y="296" width="2" height="1" fill="#a02a2e" opacity="0.8"/><rect x="283" y="296" width="2" height="2" fill="#a02a2e" opacity="0.8"/><rect x="287" y="296" width="2" height="4" fill="#a02a2e" opacity="0.8"/><rect x="291" y="296" width="2" height="5" fill="#a02a2e" opacity="0.8"/><rect x="295" y="296" width="2" height="5" fill="#a02a2e" opacity="0.8"/><rect x="299" y="296" width="2" height="7" fill="#a02a2e" opacity="0.8"/><rect x="303" y="296" width="2" height="8" fill="#a02a2e" opacity="0.8"/><rect x="307" y="296" width="2" height="9" fill="#a02a2e" opacity="0.8"/><rect x="311" y="296" width="2" height="11" fill="#a02a2e" opacity="0.8"/><rect x="315" y="296" width="2" height="11" fill="#a02a2e" opacity="0.8"/><rect x="319" y="296" width="2" height="11" fill="#a02a2e" opacity="0.8"/><rect x="324" y="296" width="2" height="10" fill="#a02a2e" opacity="0.8"/><rect x="328" y="296" width="2" height="6" fill="#a02a2e" opacity="0.8"/><rect x="332" y="296" width="2" height="4" fill="#a02a2e" opacity="0.8"/><rect x="336" y="296" width="2" height="2" fill="#a02a2e" opacity="0.8"/><rect x="340" y="296" width="2" height="1" fill="#a02a2e" opacity="0.8"/><rect x="344" y="296" width="2" height="1" fill="#a02a2e" opacity="0.8"/><rect x="348" y="296" width="2" height="1" fill="#a02a2e" opacity="0.8"/><rect x="352" y="296" width="2" height="1" fill="#a02a2e" opacity="0.8"/><rect x="356" y="296" width="2" height="1" fill="#a02a2e" opacity="0.8"/><rect x="360" y="296" width="2" height="1" fill="#a02a2e" opacity="0.8"/><rect x="364" y="296" width="2" height="1" fill="#a02a2e" opacity="0.8"/><rect x="368" y="296" width="2" height="1" fill="#a02a2e" opacity="0.8"/><rect x="372" y="295" width="2" height="1" fill="#a02a2e" opacity="0.8"/><rect x="376" y="294" width="2" height="2" fill="#a02a2e" opacity="0.8"/><rect x="380" y="294" width="2" height="3" fill="#a02a2e" opacity="0.8"/><rect x="384" y="294" width="2" height="2" fill="#a02a2e" opacity="0.8"/><rect x="388" y="294" width="2" height="2" fill="#a02a2e" opacity="0.8"/><rect x="392" y="295" width="2" height="2" fill="#a02a2e" opacity="0.8"/><rect x="396" y="294" width="2" height="2" fill="#a02a2e" opacity="0.8"/><rect x="401" y="294" width="2" height="2" fill="#a02a2e" opacity="0.8"/><rect x="405" y="294" width="2" height="3" fill="#a02a2e" opacity="0.8"/><rect x="409" y="294" width="2" height="2" fill="#a02a2e" opacity="0.8"/><rect x="413" y="295" width="2" height="1" fill="#a02a2e" opacity="0.8"/><rect x="417" y="296" width="2" height="1" fill="#a02a2e" opacity="0.8"/><rect x="421" y="296" width="2" height="3" fill="#a02a2e" opacity="0.8"/><rect x="425" y="296" width="2" height="4" fill="#a02a2e" opacity="0.8"/><rect x="429" y="296" width="2" height="5" fill="#a02a2e" opacity="0.8"/><rect x="433" y="296" width="2" height="4" fill="#a02a2e" opacity="0.8"/><rect x="437" y="296" width="2" height="3" fill="#a02a2e" opacity="0.8"/><rect x="441" y="296" width="2" height="3" fill="#a02a2e" opacity="0.8"/><rect x="445" y="296" width="2" height="2" fill="#a02a2e" opacity="0.8"/><rect x="449" y="296" width="2" height="2" fill="#a02a2e" opacity="0.8"/><rect x="453" y="296" width="2" height="2" fill="#a02a2e" opacity="0.8"/><rect x="457" y="296" width="2" height="1" fill="#a02a2e" opacity="0.8"/><rect x="461" y="296" width="2" height="1" fill="#a02a2e" opacity="0.8"/><rect x="465" y="296" width="2" height="1" fill="#a02a2e" opacity="0.8"/><rect x="469" y="294" width="2" height="3" fill="#a02a2e" opacity="0.8"/><rect x="473" y="291" width="2" height="5" fill="#a02a2e" opacity="0.8"/><rect x="478" y="293" width="2" height="3" fill="#a02a2e" opacity="0.8"/><rect x="482" y="294" width="2" height="2" fill="#a02a2e" opacity="0.8"/><rect x="486" y="295" width="2" height="2" fill="#a02a2e" opacity="0.8"/><rect x="490" y="295" width="2" height="1" fill="#a02a2e" opacity="0.8"/><rect x="494" y="296" width="2" height="1" fill="#a02a2e" opacity="0.8"/><rect x="498" y="296" width="2" height="1" fill="#a02a2e" opacity="0.8"/><rect x="502" y="296" width="2" height="1" fill="#a02a2e" opacity="0.8"/><rect x="506" y="296" width="2" height="1" fill="#a02a2e" opacity="0.8"/><rect x="510" y="296" width="2" height="1" fill="#a02a2e" opacity="0.8"/><rect x="514" y="296" width="2" height="1" fill="#a02a2e" opacity="0.8"/><rect x="518" y="296" width="2" height="2" fill="#a02a2e" opacity="0.8"/><rect x="522" y="296" width="2" height="2" fill="#a02a2e" opacity="0.8"/><rect x="526" y="296" width="2" height="1" fill="#a02a2e" opacity="0.8"/><rect x="530" y="296" width="2" height="1" fill="#a02a2e" opacity="0.8"/><rect x="534" y="296" width="2" height="1" fill="#a02a2e" opacity="0.8"/><rect x="538" y="296" width="2" height="2" fill="#a02a2e" opacity="0.8"/><rect x="542" y="296" width="2" height="1" fill="#a02a2e" opacity="0.8"/><rect x="546" y="296" width="2" height="2" fill="#a02a2e" opacity="0.8"/><rect x="550" y="296" width="2" height="3" fill="#a02a2e" opacity="0.8"/><rect x="554" y="296" width="2" height="3" fill="#a02a2e" opacity="0.8"/><rect x="559" y="296" width="2" height="4" fill="#a02a2e" opacity="0.8"/><rect x="563" y="296" width="2" height="3" fill="#a02a2e" opacity="0.8"/><rect x="567" y="296" width="2" height="3" fill="#a02a2e" opacity="0.8"/><rect x="571" y="296" width="2" height="4" fill="#a02a2e" opacity="0.8"/><rect x="575" y="296" width="2" height="5" fill="#a02a2e" opacity="0.8"/><rect x="579" y="296" width="2" height="6" fill="#a02a2e" opacity="0.8"/><rect x="583" y="296" width="2" height="6" fill="#a02a2e" opacity="0.8"/><rect x="587" y="296" width="2" height="5" fill="#a02a2e" opacity="0.8"/><rect x="591" y="296" width="2" height="4" fill="#a02a2e" opacity="0.8"/><rect x="595" y="296" width="2" height="4" fill="#a02a2e" opacity="0.8"/><rect x="599" y="296" width="2" height="3" fill="#a02a2e" opacity="0.8"/><rect x="603" y="296" width="2" height="3" fill="#a02a2e" opacity="0.8"/><rect x="607" y="296" width="2" height="2" fill="#a02a2e" opacity="0.8"/><rect x="611" y="296" width="2" height="1" fill="#a02a2e" opacity="0.8"/><rect x="615" y="296" width="2" height="1" fill="#a02a2e" opacity="0.8"/><rect x="619" y="296" width="2" height="1" fill="#a02a2e" opacity="0.8"/><rect x="623" y="295" width="2" height="2" fill="#a02a2e" opacity="0.8"/><rect x="627" y="295" width="2" height="2" fill="#a02a2e" opacity="0.8"/><rect x="631" y="294" width="2" height="3" fill="#a02a2e" opacity="0.8"/><rect x="636" y="294" width="2" height="2" fill="#a02a2e" opacity="0.8"/><rect x="640" y="296" width="2" height="1" fill="#a02a2e" opacity="0.8"/><rect x="644" y="296" width="2" height="1" fill="#a02a2e" opacity="0.8"/><rect x="648" y="296" width="2" height="2" fill="#a02a2e" opacity="0.8"/><rect x="652" y="296" width="2" height="2" fill="#a02a2e" opacity="0.8"/><rect x="656" y="296" width="2" height="2" fill="#a02a2e" opacity="0.8"/><rect x="660" y="296" width="2" height="2" fill="#a02a2e" opacity="0.8"/><rect x="664" y="296" width="2" height="1" fill="#a02a2e" opacity="0.8"/><rect x="668" y="296" width="2" height="1" fill="#a02a2e" opacity="0.8"/><rect x="672" y="295" width="2" height="2" fill="#a02a2e" opacity="0.8"/><rect x="676" y="293" width="2" height="4" fill="#a02a2e" opacity="0.8"/><rect x="680" y="293" width="2" height="4" fill="#a02a2e" opacity="0.8"/><rect x="684" y="294" width="2" height="3" fill="#a02a2e" opacity="0.8"/><rect x="688" y="294" width="2" height="2" fill="#a02a2e" opacity="0.8"/><rect x="692" y="295" width="2" height="1" fill="#a02a2e" opacity="0.8"/><rect x="696" y="296" width="2" height="1" fill="#a02a2e" opacity="0.8"/><rect x="700" y="296" width="2" height="1" fill="#a02a2e" opacity="0.8"/><rect x="704" y="296" width="2" height="1" fill="#a02a2e" opacity="0.8"/><rect x="708" y="296" width="2" height="4" fill="#a02a2e" opacity="0.8"/><rect x="712" y="296" width="2" height="9" fill="#a02a2e" opacity="0.8"/><rect x="717" y="296" width="2" height="10" fill="#a02a2e" opacity="0.8"/><rect x="721" y="296" width="2" height="10" fill="#a02a2e" opacity="0.8"/><rect x="725" y="296" width="2" height="9" fill="#a02a2e" opacity="0.8"/><rect x="729" y="296" width="2" height="7" fill="#a02a2e" opacity="0.8"/><rect x="733" y="296" width="2" height="7" fill="#a02a2e" opacity="0.8"/><rect x="737" y="296" width="2" height="7" fill="#a02a2e" opacity="0.8"/><rect x="741" y="296" width="2" height="8" fill="#a02a2e" opacity="0.8"/><rect x="745" y="296" width="2" height="6" fill="#a02a2e" opacity="0.8"/><rect x="749" y="296" width="2" height="3" fill="#a02a2e" opacity="0.8"/><rect x="753" y="296" width="2" height="2" fill="#a02a2e" opacity="0.8"/><rect x="757" y="296" width="2" height="1" fill="#a02a2e" opacity="0.8"/><rect x="761" y="296" width="2" height="1" fill="#a02a2e" opacity="0.8"/><rect x="765" y="293" width="2" height="3" fill="#a02a2e" opacity="0.8"/><rect x="769" y="294" width="2" height="3" fill="#a02a2e" opacity="0.8"/><rect x="773" y="295" width="2" height="2" fill="#a02a2e" opacity="0.8"/><rect x="777" y="296" width="2" height="1" fill="#a02a2e" opacity="0.8"/><rect x="781" y="296" width="2" height="1" fill="#a02a2e" opacity="0.8"/><rect x="785" y="296" width="2" height="2" fill="#a02a2e" opacity="0.8"/><rect x="789" y="296" width="2" height="5" fill="#a02a2e" opacity="0.8"/><rect x="794" y="296" width="2" height="5" fill="#a02a2e" opacity="0.8"/><rect x="798" y="296" width="2" height="6" fill="#a02a2e" opacity="0.8"/><rect x="802" y="296" width="2" height="5" fill="#a02a2e" opacity="0.8"/><rect x="806" y="296" width="2" height="5" fill="#a02a2e" opacity="0.8"/><rect x="810" y="296" width="2" height="7" fill="#a02a2e" opacity="0.8"/><rect x="814" y="296" width="2" height="10" fill="#a02a2e" opacity="0.8"/><rect x="818" y="296" width="2" height="10" fill="#a02a2e" opacity="0.8"/><rect x="822" y="296" width="2" height="8" fill="#a02a2e" opacity="0.8"/><rect x="826" y="296" width="2" height="5" fill="#a02a2e" opacity="0.8"/><rect x="830" y="296" width="2" height="3" fill="#a02a2e" opacity="0.8"/><rect x="834" y="294" width="2" height="2" fill="#a02a2e" opacity="0.8"/><rect x="838" y="290" width="2" height="7" fill="#a02a2e" opacity="0.8"/><rect x="842" y="291" width="2" height="6" fill="#a02a2e" opacity="0.8"/><rect x="846" y="292" width="2" height="5" fill="#a02a2e" opacity="0.8"/><rect x="850" y="292" width="2" height="5" fill="#a02a2e" opacity="0.8"/><rect x="854" y="292" width="2" height="4" fill="#a02a2e" opacity="0.8"/>
<polyline points="7.6,293.5 19.1,294.5 32.5,296.0 43.9,299.2 57.3,301.2 66.8,304.0 76.4,307.3 85.9,308.4 99.3,308.4 114.6,310.1 126.0,309.7 139.4,304.0 152.8,298.3 164.2,295.4 175.7,294.5 187.2,290.6 198.6,284.0 210.0,278.2 221.5,274.4 238.6,272.5 257.7,271.2 276.8,268.7 290.2,270.6 305.5,278.2 317.0,284.0 328.4,290.6 339.9,292.6 362.8,291.6 378.1,289.7 393.3,286.8 408.6,284.5 420.1,284.9 439.1,286.8 467.7,285.9 486.8,282.6 505.9,281.1 538.4,281.1 553.7,283.4 572.8,286.8 588.1,291.6 607.2,294.5 622.4,293.5 630.0,291.3 643.0,289.8 658.2,291.3 673.4,288.0 695.1,283.3 708.1,283.7 721.1,291.3 734.2,296.7 751.5,301.0 768.9,297.8 781.9,295.6 797.1,300.0 814.5,307.6 825.3,313.0 838.3,308.7 855.7,302.8" fill="none" stroke="#c02828" stroke-width="0.6" opacity="0.6" shape-rendering="auto"/>
<g shape-rendering="auto"><circle cx="8.0" cy="293.5" r="1.6" fill="#e42632"/><circle cx="12.1" cy="293.9" r="1.6" fill="#e42632"/><circle cx="16.1" cy="294.2" r="1.6" fill="#e42632"/><circle cx="20.2" cy="294.6" r="1.6" fill="#e42632"/><circle cx="24.2" cy="295.1" r="1.6" fill="#e42632"/><circle cx="28.3" cy="295.5" r="1.6" fill="#e42632"/><circle cx="32.3" cy="296.0" r="1.6" fill="#e42632"/><circle cx="36.4" cy="297.1" r="1.6" fill="#e42632"/><circle cx="40.4" cy="298.2" r="1.6" fill="#e42632"/><circle cx="44.5" cy="299.3" r="1.6" fill="#e42632"/><circle cx="48.5" cy="299.9" r="1.6" fill="#e42632"/><circle cx="52.6" cy="300.5" r="1.6" fill="#e42632"/><circle cx="56.6" cy="301.1" r="1.6" fill="#e42632"/><circle cx="60.7" cy="302.2" r="1.6" fill="#e42632"/><circle cx="64.8" cy="303.4" r="1.6" fill="#e42632"/><circle cx="68.8" cy="304.7" r="1.6" fill="#e42632"/><circle cx="72.9" cy="306.1" r="1.6" fill="#e42632"/><circle cx="76.9" cy="307.4" r="1.6" fill="#e42632"/><circle cx="81.0" cy="307.8" r="1.6" fill="#e42632"/><circle cx="85.0" cy="308.3" r="1.6" fill="#e42632"/><circle cx="89.1" cy="308.4" r="1.6" fill="#e42632"/><circle cx="93.1" cy="308.4" r="1.6" fill="#e42632"/><circle cx="97.2" cy="308.4" r="1.6" fill="#e42632"/><circle cx="101.2" cy="308.6" r="1.6" fill="#e42632"/><circle cx="105.3" cy="309.1" r="1.6" fill="#e42632"/><circle cx="109.3" cy="309.5" r="1.6" fill="#e42632"/><circle cx="113.4" cy="310.0" r="1.6" fill="#e42632"/><circle cx="117.4" cy="310.0" r="1.6" fill="#e42632"/><circle cx="121.5" cy="309.9" r="1.6" fill="#e42632"/><circle cx="125.5" cy="309.7" r="1.6" fill="#e42632"/><circle cx="129.6" cy="308.2" r="1.6" fill="#e42632"/><circle cx="133.6" cy="306.5" r="1.6" fill="#e42632"/><circle cx="137.7" cy="304.7" r="1.6" fill="#e42632"/><circle cx="141.7" cy="303.0" r="1.6" fill="#e42632"/><circle cx="145.8" cy="301.3" r="1.6" fill="#e42632"/><circle cx="149.8" cy="299.6" r="1.6" fill="#e42632"/><circle cx="153.9" cy="298.0" r="1.6" fill="#e42632"/><circle cx="157.9" cy="297.0" r="1.6" fill="#e42632"/><circle cx="162.0" cy="296.0" r="1.6" fill="#e42632"/><circle cx="166.0" cy="295.3" r="1.6" fill="#e42632"/><circle cx="170.1" cy="294.9" r="1.6" fill="#e42632"/><circle cx="174.1" cy="294.6" r="1.6" fill="#e42632"/><circle cx="178.2" cy="293.7" r="1.6" fill="#e42632"/><circle cx="182.2" cy="292.3" r="1.6" fill="#e42632"/><circle cx="186.3" cy="290.9" r="1.6" fill="#e42632"/><circle cx="190.3" cy="288.8" r="1.6" fill="#e42632"/><circle cx="194.4" cy="286.4" r="1.6" fill="#e42632"/><circle cx="198.5" cy="284.1" r="1.6" fill="#e42632"/><circle cx="202.5" cy="282.0" r="1.6" fill="#e42632"/><circle cx="206.6" cy="280.0" r="1.6" fill="#e42632"/><circle cx="210.6" cy="278.0" r="1.6" fill="#e42632"/><circle cx="214.7" cy="276.7" r="1.6" fill="#e42632"/><circle cx="218.7" cy="275.3" r="1.6" fill="#e42632"/><circle cx="222.8" cy="274.3" r="1.6" fill="#e42632"/><circle cx="226.8" cy="273.8" r="1.6" fill="#e42632"/><circle cx="230.9" cy="273.4" r="1.6" fill="#e42632"/><circle cx="234.9" cy="272.9" r="1.6" fill="#e42632"/><circle cx="239.0" cy="272.5" r="1.6" fill="#e42632"/><circle cx="243.0" cy="272.2" r="1.6" fill="#e42632"/><circle cx="247.1" cy="271.9" r="1.6" fill="#e42632"/><circle cx="251.1" cy="271.6" r="1.6" fill="#e42632"/><circle cx="255.2" cy="271.4" r="1.6" fill="#e42632"/><circle cx="259.2" cy="271.0" r="1.6" fill="#e42632"/><circle cx="263.3" cy="270.5" r="1.6" fill="#e42632"/><circle cx="267.3" cy="269.9" r="1.6" fill="#e42632"/><circle cx="271.4" cy="269.4" r="1.6" fill="#e42632"/><circle cx="275.4" cy="268.9" r="1.6" fill="#e42632"/><circle cx="279.5" cy="269.1" r="1.6" fill="#e42632"/><circle cx="283.5" cy="269.7" r="1.6" fill="#e42632"/><circle cx="287.6" cy="270.2" r="1.6" fill="#e42632"/><circle cx="291.6" cy="271.3" r="1.6" fill="#e42632"/><circle cx="295.7" cy="273.3" r="1.6" fill="#e42632"/><circle cx="299.7" cy="275.3" r="1.6" fill="#e42632"/><circle cx="303.8" cy="277.4" r="1.6" fill="#e42632"/><circle cx="307.8" cy="279.4" r="1.6" fill="#e42632"/><circle cx="311.9" cy="281.4" r="1.6" fill="#e42632"/><circle cx="315.9" cy="283.5" r="1.6" fill="#e42632"/><circle cx="320.0" cy="285.7" r="1.6" fill="#e42632"/><circle cx="324.0" cy="288.1" r="1.6" fill="#e42632"/><circle cx="328.1" cy="290.4" r="1.6" fill="#e42632"/><circle cx="332.1" cy="291.3" r="1.6" fill="#e42632"/><circle cx="336.2" cy="292.0" r="1.6" fill="#e42632"/><circle cx="340.3" cy="292.6" r="1.6" fill="#e42632"/><circle cx="344.3" cy="292.4" r="1.6" fill="#e42632"/><circle cx="348.4" cy="292.2" r="1.6" fill="#e42632"/><circle cx="352.4" cy="292.1" r="1.6" fill="#e42632"/><circle cx="356.5" cy="291.9" r="1.6" fill="#e42632"/><circle cx="360.5" cy="291.7" r="1.6" fill="#e42632"/><circle cx="364.6" cy="291.4" r="1.6" fill="#e42632"/><circle cx="368.6" cy="290.9" r="1.6" fill="#e42632"/><circle cx="372.7" cy="290.4" r="1.6" fill="#e42632"/><circle cx="376.7" cy="289.9" r="1.6" fill="#e42632"/><circle cx="380.8" cy="289.2" r="1.6" fill="#e42632"/><circle cx="384.8" cy="288.4" r="1.6" fill="#e42632"/><circle cx="388.9" cy="287.6" r="1.6" fill="#e42632"/><circle cx="392.9" cy="286.9" r="1.6" fill="#e42632"/><circle cx="397.0" cy="286.2" r="1.6" fill="#e42632"/><circle cx="401.0" cy="285.6" r="1.6" fill="#e42632"/><circle cx="405.1" cy="285.0" r="1.6" fill="#e42632"/><circle cx="409.1" cy="284.5" r="1.6" fill="#e42632"/><circle cx="413.2" cy="284.7" r="1.6" fill="#e42632"/><circle cx="417.2" cy="284.8" r="1.6" fill="#e42632"/><circle cx="421.3" cy="285.0" r="1.6" fill="#e42632"/><circle cx="425.3" cy="285.4" r="1.6" fill="#e42632"/><circle cx="429.4" cy="285.8" r="1.6" fill="#e42632"/><circle cx="433.4" cy="286.2" r="1.6" fill="#e42632"/><circle cx="437.5" cy="286.6" r="1.6" fill="#e42632"/><circle cx="441.5" cy="286.7" r="1.6" fill="#e42632"/><circle cx="445.6" cy="286.6" r="1.6" fill="#e42632"/><circle cx="449.6" cy="286.5" r="1.6" fill="#e42632"/><circle cx="453.7" cy="286.3" r="1.6" fill="#e42632"/><circle cx="457.7" cy="286.2" r="1.6" fill="#e42632"/><circle cx="461.8" cy="286.1" r="1.6" fill="#e42632"/><circle cx="465.8" cy="286.0" r="1.6" fill="#e42632"/><circle cx="469.9" cy="285.5" r="1.6" fill="#e42632"/><circle cx="474.0" cy="284.8" r="1.6" fill="#e42632"/><circle cx="478.0" cy="284.1" r="1.6" fill="#e42632"/><circle cx="482.1" cy="283.4" r="1.6" fill="#e42632"/><circle cx="486.1" cy="282.7" r="1.6" fill="#e42632"/><circle cx="490.2" cy="282.3" r="1.6" fill="#e42632"/><circle cx="494.2" cy="282.0" r="1.6" fill="#e42632"/><circle cx="498.3" cy="281.7" r="1.6" fill="#e42632"/><circle cx="502.3" cy="281.4" r="1.6" fill="#e42632"/><circle cx="506.4" cy="281.1" r="1.6" fill="#e42632"/><circle cx="510.4" cy="281.1" r="1.6" fill="#e42632"/><circle cx="514.5" cy="281.1" r="1.6" fill="#e42632"/><circle cx="518.5" cy="281.1" r="1.6" fill="#e42632"/><circle cx="522.6" cy="281.1" r="1.6" fill="#e42632"/><circle cx="526.6" cy="281.1" r="1.6" fill="#e42632"/><circle cx="530.7" cy="281.1" r="1.6" fill="#e42632"/><circle cx="534.7" cy="281.1" r="1.6" fill="#e42632"/><circle cx="538.8" cy="281.2" r="1.6" fill="#e42632"/><circle cx="542.8" cy="281.8" r="1.6" fill="#e42632"/><circle cx="546.9" cy="282.4" r="1.6" fill="#e42632"/><circle cx="550.9" cy="283.0" r="1.6" fill="#e42632"/><circle cx="555.0" cy="283.6" r="1.6" fill="#e42632"/><circle cx="559.0" cy="284.3" r="1.6" fill="#e42632"/><circle cx="563.1" cy="285.1" r="1.6" fill="#e42632"/><circle cx="567.1" cy="285.8" r="1.6" fill="#e42632"/><circle cx="571.2" cy="286.5" r="1.6" fill="#e42632"/><circle cx="575.2" cy="287.6" r="1.6" fill="#e42632"/><circle cx="579.3" cy="288.8" r="1.6" fill="#e42632"/><circle cx="583.3" cy="290.1" r="1.6" fill="#e42632"/><circle cx="587.4" cy="291.4" r="1.6" fill="#e42632"/><circle cx="591.4" cy="292.1" r="1.6" fill="#e42632"/><circle cx="595.5" cy="292.7" r="1.6" fill="#e42632"/><circle cx="599.5" cy="293.3" r="1.6" fill="#e42632"/><circle cx="603.6" cy="294.0" r="1.6" fill="#e42632"/><circle cx="607.7" cy="294.5" r="1.6" fill="#e42632"/><circle cx="611.7" cy="294.2" r="1.6" fill="#e42632"/><circle cx="615.8" cy="293.9" r="1.6" fill="#e42632"/><circle cx="619.8" cy="293.7" r="1.6" fill="#e42632"/><circle cx="623.9" cy="293.1" r="1.6" fill="#e42632"/><circle cx="627.9" cy="291.9" r="1.6" fill="#e42632"/><circle cx="632.0" cy="291.1" r="1.6" fill="#e42632"/><circle cx="636.0" cy="290.6" r="1.6" fill="#e42632"/><circle cx="640.1" cy="290.1" r="1.6" fill="#e42632"/><circle cx="644.1" cy="289.9" r="1.6" fill="#e42632"/><circle cx="648.2" cy="290.3" r="1.6" fill="#e42632"/><circle cx="652.2" cy="290.7" r="1.6" fill="#e42632"/><circle cx="656.3" cy="291.1" r="1.6" fill="#e42632"/><circle cx="660.3" cy="290.8" r="1.6" fill="#e42632"/><circle cx="664.4" cy="290.0" r="1.6" fill="#e42632"/><circle cx="668.4" cy="289.1" r="1.6" fill="#e42632"/><circle cx="672.5" cy="288.2" r="1.6" fill="#e42632"/><circle cx="676.5" cy="287.3" r="1.6" fill="#e42632"/><circle cx="680.6" cy="286.4" r="1.6" fill="#e42632"/><circle cx="684.6" cy="285.6" r="1.6" fill="#e42632"/><circle cx="688.7" cy="284.7" r="1.6" fill="#e42632"/><circle cx="692.7" cy="283.8" r="1.6" fill="#e42632"/><circle cx="696.8" cy="283.4" r="1.6" fill="#e42632"/><circle cx="700.8" cy="283.5" r="1.6" fill="#e42632"/><circle cx="704.9" cy="283.6" r="1.6" fill="#e42632"/><circle cx="708.9" cy="284.2" r="1.6" fill="#e42632"/><circle cx="713.0" cy="286.6" r="1.6" fill="#e42632"/><circle cx="717.0" cy="288.9" r="1.6" fill="#e42632"/><circle cx="721.1" cy="291.3" r="1.6" fill="#e42632"/><circle cx="725.1" cy="293.0" r="1.6" fill="#e42632"/><circle cx="729.2" cy="294.6" r="1.6" fill="#e42632"/><circle cx="733.2" cy="296.3" r="1.6" fill="#e42632"/><circle cx="737.3" cy="297.5" r="1.6" fill="#e42632"/><circle cx="741.4" cy="298.5" r="1.6" fill="#e42632"/><circle cx="745.4" cy="299.5" r="1.6" fill="#e42632"/><circle cx="749.5" cy="300.5" r="1.6" fill="#e42632"/><circle cx="753.5" cy="300.6" r="1.6" fill="#e42632"/><circle cx="757.6" cy="299.9" r="1.6" fill="#e42632"/><circle cx="761.6" cy="299.1" r="1.6" fill="#e42632"/><circle cx="765.7" cy="298.4" r="1.6" fill="#e42632"/><circle cx="769.7" cy="297.7" r="1.6" fill="#e42632"/><circle cx="773.8" cy="297.0" r="1.6" fill="#e42632"/><circle cx="777.8" cy="296.3" r="1.6" fill="#e42632"/><circle cx="781.9" cy="295.6" r="1.6" fill="#e42632"/><circle cx="785.9" cy="296.8" r="1.6" fill="#e42632"/><circle cx="790.0" cy="297.9" r="1.6" fill="#e42632"/><circle cx="794.0" cy="299.1" r="1.6" fill="#e42632"/><circle cx="798.1" cy="300.4" r="1.6" fill="#e42632"/><circle cx="802.1" cy="302.2" r="1.6" fill="#e42632"/><circle cx="806.2" cy="304.0" r="1.6" fill="#e42632"/><circle cx="810.2" cy="305.7" r="1.6" fill="#e42632"/><circle cx="814.3" cy="307.5" r="1.6" fill="#e42632"/><circle cx="818.3" cy="309.5" r="1.6" fill="#e42632"/><circle cx="822.4" cy="311.5" r="1.6" fill="#e42632"/><circle cx="826.4" cy="312.6" r="1.6" fill="#e42632"/><circle cx="830.5" cy="311.3" r="1.6" fill="#e42632"/><circle cx="834.5" cy="309.9" r="1.6" fill="#e42632"/><circle cx="838.6" cy="308.6" r="1.6" fill="#e42632"/><circle cx="842.6" cy="307.2" r="1.6" fill="#e42632"/><circle cx="846.7" cy="305.9" r="1.6" fill="#e42632"/><circle cx="850.7" cy="304.5" r="1.6" fill="#e42632"/><circle cx="854.8" cy="303.1" r="1.6" fill="#e42632"/></g>
<polyline points="5.7,296.4 9.5,299.2 15.3,295.4 32.5,296.4 40.1,303.0 49.7,305.0 57.3,305.0 66.8,309.7 76.4,312.6 82.1,312.6 89.8,309.7 101.2,308.8 107.0,312.6 114.6,311.7 124.1,309.7 133.7,301.2 139.4,296.4 145.1,293.5 152.8,294.5 160.4,291.6 168.0,292.6 177.6,292.6 187.2,283.0 192.9,278.2 202.4,274.4 210.0,272.5 221.5,269.3 232.9,271.2 248.2,271.2 263.5,269.3 274.9,267.7 282.6,271.5 294.0,277.3 303.6,284.9 313.1,293.5 322.7,298.3 332.2,295.4 343.7,291.6 355.2,291.6 366.6,291.6 378.1,286.8 393.3,284.9 406.7,282.0 416.3,284.0 420.0,287.8 429.5,290.6 439.1,289.7 454.4,287.8 465.8,285.9 473.5,279.6 479.2,281.1 496.4,281.1 507.9,282.0 519.3,283.0 530.8,282.0 542.2,283.0 553.7,286.8 561.3,288.4 569.0,288.7 576.6,293.5 584.3,296.4 599.5,296.8 607.2,296.4 618.6,293.5 626.3,290.6 633.9,287.6 647.4,292.4 658.2,293.5 669.1,289.1 677.7,282.6 695.1,282.6 706.0,283.7 712.5,294.6 719.0,301.0 729.8,302.1 742.8,306.5 751.5,303.2 762.4,297.8 766.7,294.6 781.9,295.6 790.6,303.2 799.3,306.5 805.8,308.7 814.5,317.3 821.0,320.6 829.7,315.2 838.3,302.1 847.0,301.0 853.5,298.9" fill="none" stroke="#160e68" stroke-width="1.25" shape-rendering="auto"/>
</g>
<g clip-path="url(#crsi)">
<rect x="6" y="334" width="848" height="1" fill="#10108a"/><rect x="6" y="335" width="848" height="1" fill="#3838a2"/>
<rect x="6" y="396" width="848" height="1" fill="#3838a2"/><rect x="6" y="397" width="848" height="1" fill="#10108a"/>
<polyline points="5.7,368.1 8.6,373.5 12.4,368.1 16.2,352.8 22.9,367.2 28.6,365.2 33.4,379.6 41.1,378.6 45.8,376.7 53.5,371.0 57.3,373.8 59.2,381.5 65.9,389.1 70.7,386.3 76.4,388.2 81.2,384.3 85.9,369.1 89.8,373.8 93.6,370.0 97.4,379.6 108.9,373.8 113.6,378.6 122.2,372.9 125.1,374.8 129.9,359.5 133.7,356.6 137.5,345.2 145.1,353.8 149.9,361.4 153.7,374.8 157.6,352.8 162.3,355.7 168.1,364.3 173.8,369.1 181.4,350.9 189.1,342.3 194.8,346.7 202.4,345.2 206.3,347.1 210.1,341.4 214.8,346.1 221.5,339.8 227.2,348.0 230.1,345.6 234.8,354.4 240.6,350.0 248.2,346.1 255.5,335.6 259.7,340.4 267.3,336.6 272.1,336.6 275.3,332.2 278.8,350.9 283.5,357.6 291.2,352.8 297.9,361.4 303.6,373.8 307.4,374.8 313.1,380.5 318.9,380.5 324.6,368.1 332.2,362.4 343.7,348.6 348.5,352.8 352.3,367.2 356.1,360.5 360.9,358.6 365.7,353.8 372.3,352.8 377.1,343.3 380.9,349.0 384.8,347.1 389.5,348.0 396.2,339.5 401.0,342.3 405.2,337.2 413.4,363.3 417.2,362.8 422.0,371.5 425.8,363.3 429.5,366.2 433.4,352.4 437.2,358.6 441.0,353.2 445.8,357.6 453.4,349.4 457.2,358.9 462.0,348.0 465.8,347.1 472.5,333.7 475.4,341.4 477.3,360.5 484.9,355.7 490.7,353.8 494.5,346.7 498.3,359.5 505.9,351.9 513.6,352.8 519.3,357.6 524.1,354.7 530.8,346.7 538.4,347.1 546.1,362.0 551.8,359.5 557.5,361.4 563.3,355.7 567.1,355.7 572.8,372.9 579.5,381.5 583.3,366.2 588.1,365.2 595.7,369.1 599.5,364.3 604.3,368.5 610.0,358.6 615.2,345.6 619.6,369.1 628.2,346.1 634.3,349.7 639.8,369.2 644.1,372.5 652.8,363.2 656.0,366.0 660.4,358.0 664.7,355.1 672.3,338.4 676.7,349.7 681.0,348.6 688.6,359.5 696.2,347.5 700.5,362.7 704.9,361.0 708.1,362.7 712.5,390.5 716.8,385.5 725.5,367.5 729.8,371.4 736.3,371.4 741.8,379.6 746.1,368.1 751.5,367.5 755.9,364.5 760.2,355.1 765.6,351.4 770.0,362.7 774.3,361.6 781.9,368.1 786.2,379.0 792.8,381.8 799.3,380.1 806.9,376.8 811.2,392.0 814.5,398.5 821.0,385.5 826.4,368.1 830.7,364.5 835.1,351.9 839.4,351.9 842.7,366.0 849.2,363.8 853.5,364.9" fill="none" stroke="#ec8c36" stroke-width="1.0" shape-rendering="auto"/>
</g>
<rect x="5.5" y="38.5" width="873" height="220" fill="none" stroke="#adbccb" stroke-width="1"/>
<rect x="5.5" y="264.5" width="873" height="59" fill="none" stroke="#adbccb" stroke-width="1"/>
<rect x="5.5" y="329.5" width="873" height="73" fill="none" stroke="#adbccb" stroke-width="1"/>
<rect x="879" y="66" width="4" height="1" fill="#adbccb"/>
<rect x="879" y="97" width="4" height="1" fill="#adbccb"/>
<rect x="879" y="129" width="4" height="1" fill="#adbccb"/>
<rect x="879" y="160" width="4" height="1" fill="#adbccb"/>
<rect x="879" y="192" width="4" height="1" fill="#adbccb"/>
<rect x="879" y="223" width="4" height="1" fill="#adbccb"/>
<rect x="879" y="269" width="4" height="1" fill="#adbccb"/>
<rect x="879" y="296" width="4" height="1" fill="#adbccb"/>
<rect x="879" y="349" width="4" height="1" fill="#adbccb"/>
<rect x="879" y="381" width="4" height="1" fill="#adbccb"/>
<rect x="24" y="403" width="1" height="4" fill="#adbccb"/>
<rect x="48" y="403" width="1" height="4" fill="#adbccb"/>
<rect x="72" y="403" width="1" height="4" fill="#adbccb"/>
<rect x="97" y="403" width="1" height="4" fill="#adbccb"/>
<rect x="121" y="403" width="1" height="4" fill="#adbccb"/>
<rect x="145" y="403" width="1" height="4" fill="#adbccb"/>
<rect x="170" y="403" width="1" height="4" fill="#adbccb"/>
<rect x="194" y="403" width="1" height="4" fill="#adbccb"/>
<rect x="218" y="403" width="1" height="4" fill="#adbccb"/>
<rect x="243" y="403" width="1" height="4" fill="#adbccb"/>
<rect x="267" y="403" width="1" height="4" fill="#adbccb"/>
<rect x="291" y="403" width="1" height="4" fill="#adbccb"/>
<rect x="315" y="403" width="1" height="4" fill="#adbccb"/>
<rect x="340" y="403" width="1" height="4" fill="#adbccb"/>
<rect x="364" y="403" width="1" height="4" fill="#adbccb"/>
<rect x="388" y="403" width="1" height="4" fill="#adbccb"/>
<rect x="413" y="403" width="1" height="4" fill="#adbccb"/>
<rect x="437" y="403" width="1" height="4" fill="#adbccb"/>
<rect x="461" y="403" width="1" height="4" fill="#adbccb"/>
<rect x="486" y="403" width="1" height="4" fill="#adbccb"/>
<rect x="510" y="403" width="1" height="4" fill="#adbccb"/>
<rect x="534" y="403" width="1" height="4" fill="#adbccb"/>
<rect x="558" y="403" width="1" height="4" fill="#adbccb"/>
<rect x="583" y="403" width="1" height="4" fill="#adbccb"/>
<rect x="607" y="403" width="1" height="4" fill="#adbccb"/>
<rect x="631" y="403" width="1" height="4" fill="#adbccb"/>
<rect x="656" y="403" width="1" height="4" fill="#adbccb"/>
<rect x="680" y="403" width="1" height="4" fill="#adbccb"/>
<rect x="704" y="403" width="1" height="4" fill="#adbccb"/>
<rect x="729" y="403" width="1" height="4" fill="#adbccb"/>
<rect x="753" y="403" width="1" height="4" fill="#adbccb"/>
<rect x="777" y="403" width="1" height="4" fill="#adbccb"/>
<rect x="802" y="403" width="1" height="4" fill="#adbccb"/>
<rect x="826" y="403" width="1" height="4" fill="#adbccb"/>
<rect x="850" y="403" width="1" height="4" fill="#adbccb"/>
<rect x="874" y="403" width="1" height="4" fill="#adbccb"/>
</svg>
<svg width="1152" height="648" style="position:absolute;left:0;top:0" font-family="Liberation Sans, sans-serif"><text x="24.5" y="425" font-size="11" fill="#f2f4f6" stroke="#f2f4f6" stroke-width="0.3" text-anchor="middle" letter-spacing="-0.25">28</text><text x="48.5" y="425" font-size="11" fill="#f2f4f6" stroke="#f2f4f6" stroke-width="0.3" text-anchor="middle" letter-spacing="-0.25">29</text><text x="72.5" y="425" font-size="11" fill="#f2f4f6" stroke="#f2f4f6" stroke-width="0.3" text-anchor="middle" letter-spacing="-0.25">30</text><text x="97.5" y="425" font-size="11" fill="#f2f4f6" stroke="#f2f4f6" stroke-width="0.3" text-anchor="middle" letter-spacing="-0.25">2</text><text x="121.5" y="425" font-size="11" fill="#f2f4f6" stroke="#f2f4f6" stroke-width="0.3" text-anchor="middle" letter-spacing="-0.25">3</text><text x="145.5" y="425" font-size="11" fill="#f2f4f6" stroke="#f2f4f6" stroke-width="0.3" text-anchor="middle" letter-spacing="-0.25">4</text><text x="170.5" y="425" font-size="11" fill="#f2f4f6" stroke="#f2f4f6" stroke-width="0.3" text-anchor="middle" letter-spacing="-0.25">5</text><text x="194.5" y="425" font-size="11" fill="#f2f4f6" stroke="#f2f4f6" stroke-width="0.3" text-anchor="middle" letter-spacing="-0.25">6</text><text x="218.5" y="425" font-size="11" fill="#f2f4f6" stroke="#f2f4f6" stroke-width="0.3" text-anchor="middle" letter-spacing="-0.25">9</text><text x="243.5" y="425" font-size="11" fill="#f2f4f6" stroke="#f2f4f6" stroke-width="0.3" text-anchor="middle" letter-spacing="-0.25">10</text><text x="267.5" y="425" font-size="11" fill="#f2f4f6" stroke="#f2f4f6" stroke-width="0.3" text-anchor="middle" letter-spacing="-0.25">11</text><text x="291.5" y="425" font-size="11" fill="#f2f4f6" stroke="#f2f4f6" stroke-width="0.3" text-anchor="middle" letter-spacing="-0.25">12</text><text x="315.5" y="425" font-size="11" fill="#f2f4f6" stroke="#f2f4f6" stroke-width="0.3" text-anchor="middle" letter-spacing="-0.25">13</text><text x="340.5" y="425" font-size="11" fill="#f2f4f6" stroke="#f2f4f6" stroke-width="0.3" text-anchor="middle" letter-spacing="-0.25">16</text><text x="364.5" y="425" font-size="11" fill="#f2f4f6" stroke="#f2f4f6" stroke-width="0.3" text-anchor="middle" letter-spacing="-0.25">17</text><text x="388.5" y="425" font-size="11" fill="#f2f4f6" stroke="#f2f4f6" stroke-width="0.3" text-anchor="middle" letter-spacing="-0.25">18</text><text x="413.5" y="425" font-size="11" fill="#f2f4f6" stroke="#f2f4f6" stroke-width="0.3" text-anchor="middle" letter-spacing="-0.25">19</text><text x="437.5" y="425" font-size="11" fill="#f2f4f6" stroke="#f2f4f6" stroke-width="0.3" text-anchor="middle" letter-spacing="-0.25">20</text><text x="461.5" y="425" font-size="11" fill="#f2f4f6" stroke="#f2f4f6" stroke-width="0.3" text-anchor="middle" letter-spacing="-0.25">23</text><text x="486.5" y="425" font-size="11" fill="#f2f4f6" stroke="#f2f4f6" stroke-width="0.3" text-anchor="middle" letter-spacing="-0.25">24</text><text x="510.5" y="425" font-size="11" fill="#f2f4f6" stroke="#f2f4f6" stroke-width="0.3" text-anchor="middle" letter-spacing="-0.25">25</text><text x="534.5" y="425" font-size="11" fill="#f2f4f6" stroke="#f2f4f6" stroke-width="0.3" text-anchor="middle" letter-spacing="-0.25">26</text><text x="558.5" y="425" font-size="11" fill="#f2f4f6" stroke="#f2f4f6" stroke-width="0.3" text-anchor="middle" letter-spacing="-0.25">27</text><text x="583.5" y="425" font-size="11" fill="#f2f4f6" stroke="#f2f4f6" stroke-width="0.3" text-anchor="middle" letter-spacing="-0.25">30</text><text x="607.5" y="425" font-size="11" fill="#f2f4f6" stroke="#f2f4f6" stroke-width="0.3" text-anchor="middle" letter-spacing="-0.25">1</text><text x="631.5" y="425" font-size="11" fill="#f2f4f6" stroke="#f2f4f6" stroke-width="0.3" text-anchor="middle" letter-spacing="-0.25">2</text><text x="656.5" y="425" font-size="11" fill="#f2f4f6" stroke="#f2f4f6" stroke-width="0.3" text-anchor="middle" letter-spacing="-0.25">3</text><text x="680.5" y="425" font-size="11" fill="#f2f4f6" stroke="#f2f4f6" stroke-width="0.3" text-anchor="middle" letter-spacing="-0.25">4</text><text x="704.5" y="425" font-size="11" fill="#f2f4f6" stroke="#f2f4f6" stroke-width="0.3" text-anchor="middle" letter-spacing="-0.25">7</text><text x="729.5" y="425" font-size="11" fill="#f2f4f6" stroke="#f2f4f6" stroke-width="0.3" text-anchor="middle" letter-spacing="-0.25">8</text><text x="753.5" y="425" font-size="11" fill="#f2f4f6" stroke="#f2f4f6" stroke-width="0.3" text-anchor="middle" letter-spacing="-0.25">9</text><text x="777.5" y="425" font-size="11" fill="#f2f4f6" stroke="#f2f4f6" stroke-width="0.3" text-anchor="middle" letter-spacing="-0.25">10</text><text x="802.5" y="425" font-size="11" fill="#f2f4f6" stroke="#f2f4f6" stroke-width="0.3" text-anchor="middle" letter-spacing="-0.25">11</text><text x="826.5" y="425" font-size="11" fill="#f2f4f6" stroke="#f2f4f6" stroke-width="0.3" text-anchor="middle" letter-spacing="-0.25">14</text><text x="850.5" y="425" font-size="11" fill="#f2f4f6" stroke="#f2f4f6" stroke-width="0.3" text-anchor="middle" letter-spacing="-0.25">15</text><text x="874.5" y="425" font-size="11" fill="#f2f4f6" stroke="#f2f4f6" stroke-width="0.3" text-anchor="middle" letter-spacing="-0.25">16</text><text x="886" y="73" font-size="11" fill="#f2f4f6" stroke="#f2f4f6" stroke-width="0.3" text-anchor="start" letter-spacing="-0.25">1.3500</text><text x="886" y="104" font-size="11" fill="#f2f4f6" stroke="#f2f4f6" stroke-width="0.3" text-anchor="start" letter-spacing="-0.25">1.3400</text><text x="886" y="136" font-size="11" fill="#f2f4f6" stroke="#f2f4f6" stroke-width="0.3" text-anchor="start" letter-spacing="-0.25">1.3300</text><text x="886" y="167" font-size="11" fill="#f2f4f6" stroke="#f2f4f6" stroke-width="0.3" text-anchor="start" letter-spacing="-0.25">1.3200</text><text x="886" y="199" font-size="11" fill="#f2f4f6" stroke="#f2f4f6" stroke-width="0.3" text-anchor="start" letter-spacing="-0.25">1.3100</text><text x="886" y="230" font-size="11" fill="#f2f4f6" stroke="#f2f4f6" stroke-width="0.3" text-anchor="start" letter-spacing="-0.25">1.3000</text><text x="887" y="276" font-size="11" fill="#f2f4f6" stroke="#f2f4f6" stroke-width="0.3" text-anchor="start" letter-spacing="-0.25">+0.005</text><text x="887" y="303" font-size="11" fill="#f2f4f6" stroke="#f2f4f6" stroke-width="0.3" text-anchor="start" letter-spacing="-0.25">+0.000</text><text x="886" y="356" font-size="11" fill="#f2f4f6" stroke="#f2f4f6" stroke-width="0.3" text-anchor="start" letter-spacing="-0.25">60</text><text x="886" y="388" font-size="11" fill="#f2f4f6" stroke="#f2f4f6" stroke-width="0.3" text-anchor="start" letter-spacing="-0.25">40</text><defs><linearGradient id="btn2" x1="0" y1="0" x2="0" y2="1"><stop offset="0" stop-color="#dde6ef"/><stop offset="1" stop-color="#c9d4df"/></linearGradient><linearGradient id="sqr" x1="0" y1="0" x2="0" y2="1"><stop offset="0" stop-color="#f45050"/><stop offset="1" stop-color="#c01c1c"/></linearGradient><linearGradient id="sqb" x1="0" y1="0" x2="0" y2="1"><stop offset="0" stop-color="#48b8ec"/><stop offset="1" stop-color="#1c78c8"/></linearGradient></defs><rect x="6" y="39" width="276" height="13" fill="#3a4048"/><text x="8" y="50" font-size="10" fill="#1a1ee0">Exponential_Moving_Average</text><text x="146" y="50" font-size="10" fill="#e01c1c">Exponential_Moving_Average</text><rect x="5" y="38" width="31" height="22" fill="#ededed"/><rect x="5" y="38" width="31" height="5" fill="#cfcfcf"/><rect x="9.4" y="46.4" width="9.2" height="9.2" rx="2" fill="url(#sqr)" stroke="#8c1414" stroke-width="0.8"/><rect x="22.4" y="46.4" width="9.2" height="9.2" rx="2" fill="url(#sqb)" stroke="#14589a" stroke-width="0.8"/><rect x="878" y="108" width="48" height="21" fill="#ffffff"/><text x="888" y="122" font-size="11" fill="#303844">1.3334</text><rect x="6.5" y="379.5" width="60" height="19" rx="2" fill="#58687e" stroke="#b8cad6" stroke-width="1"/><rect x="5" y="379" width="2" height="27" fill="#d4e6ea"/><text x="13" y="393" font-size="11" fill="#f4f6f8" stroke="#f4f6f8" stroke-width="0.15">Окт 2020</text><rect x="98.5" y="379.5" width="62" height="19" rx="2" fill="#58687e" stroke="#b8cad6" stroke-width="1"/><rect x="97" y="379" width="2" height="27" fill="#d4e6ea"/><text x="105" y="393" font-size="11" fill="#f4f6f8" stroke="#f4f6f8" stroke-width="0.15">Нов 2020</text><rect x="608.5" y="379.5" width="60" height="19" rx="2" fill="#58687e" stroke="#b8cad6" stroke-width="1"/><rect x="607" y="379" width="2" height="27" fill="#d4e6ea"/><text x="615" y="393" font-size="11" fill="#f4f6f8" stroke="#f4f6f8" stroke-width="0.15">Дек 2020</text><rect x="6" y="266" width="30" height="11" fill="#3a4048"/><text x="8" y="276" font-size="10" fill="#1a1e6a" letter-spacing="-0.3">MACD</text><rect x="6" y="331" width="17" height="11" fill="#3a4048"/><text x="8" y="341" font-size="10" fill="#e8843a" letter-spacing="-0.6">RSI</text><text x="18" y="21" font-size="12" fill="#4d5566" letter-spacing="-0.35" xml:space="preserve">График GBP /USD&#160; 4 ЧАСА</text><g fill="none" stroke="#3a5060" stroke-width="1"><line x1="2.5" y1="13" x2="2.5" y2="21"/><line x1="6.5" y1="8" x2="6.5" y2="18"/><line x1="10.5" y1="11" x2="10.5" y2="20"/></g><rect x="1.5" y="15" width="2" height="4" fill="#6a9a7a" stroke="#3a5060" stroke-width="0.8"/><rect x="5.5" y="10" width="2" height="5" fill="#6ab07a" stroke="#3a5060" stroke-width="0.8"/><rect x="9.5" y="13" width="2" height="5" fill="#9a6a7a" stroke="#3a5060" stroke-width="0.8"/><path d="M0 22.5 H12.5 M10.5 20.5 L12.5 22.5 L10.5 24.5" fill="none" stroke="#3a6070" stroke-width="1"/><rect x="835.5" y="8.5" width="30" height="16" rx="2" fill="url(#btn2)" stroke="#9aa8b8" stroke-width="1"/><rect x="868.5" y="8.5" width="30" height="16" rx="2" fill="url(#btn2)" stroke="#9aa8b8" stroke-width="1"/><rect x="901.5" y="8.5" width="30" height="16" rx="2" fill="url(#btn2)" stroke="#9aa8b8" stroke-width="1"/><rect x="845.5" y="16.5" width="10" height="4" rx="1.5" fill="#f4f6f8" stroke="#404850" stroke-width="1"/><rect x="878.5" y="12.5" width="10" height="8" rx="1" fill="#f4f6f8" stroke="#404850" stroke-width="1"/><rect x="881.5" y="15.5" width="4" height="2" fill="none" stroke="#404850" stroke-width="1"/><path d="M913 13.5 L920 19.5 M920 13.5 L913 19.5" stroke="#404850" stroke-width="4" stroke-linecap="round"/><path d="M913 13.5 L920 19.5 M920 13.5 L913 19.5" stroke="#f4f6f8" stroke-width="2" stroke-linecap="round"/></svg>
</body></html>
